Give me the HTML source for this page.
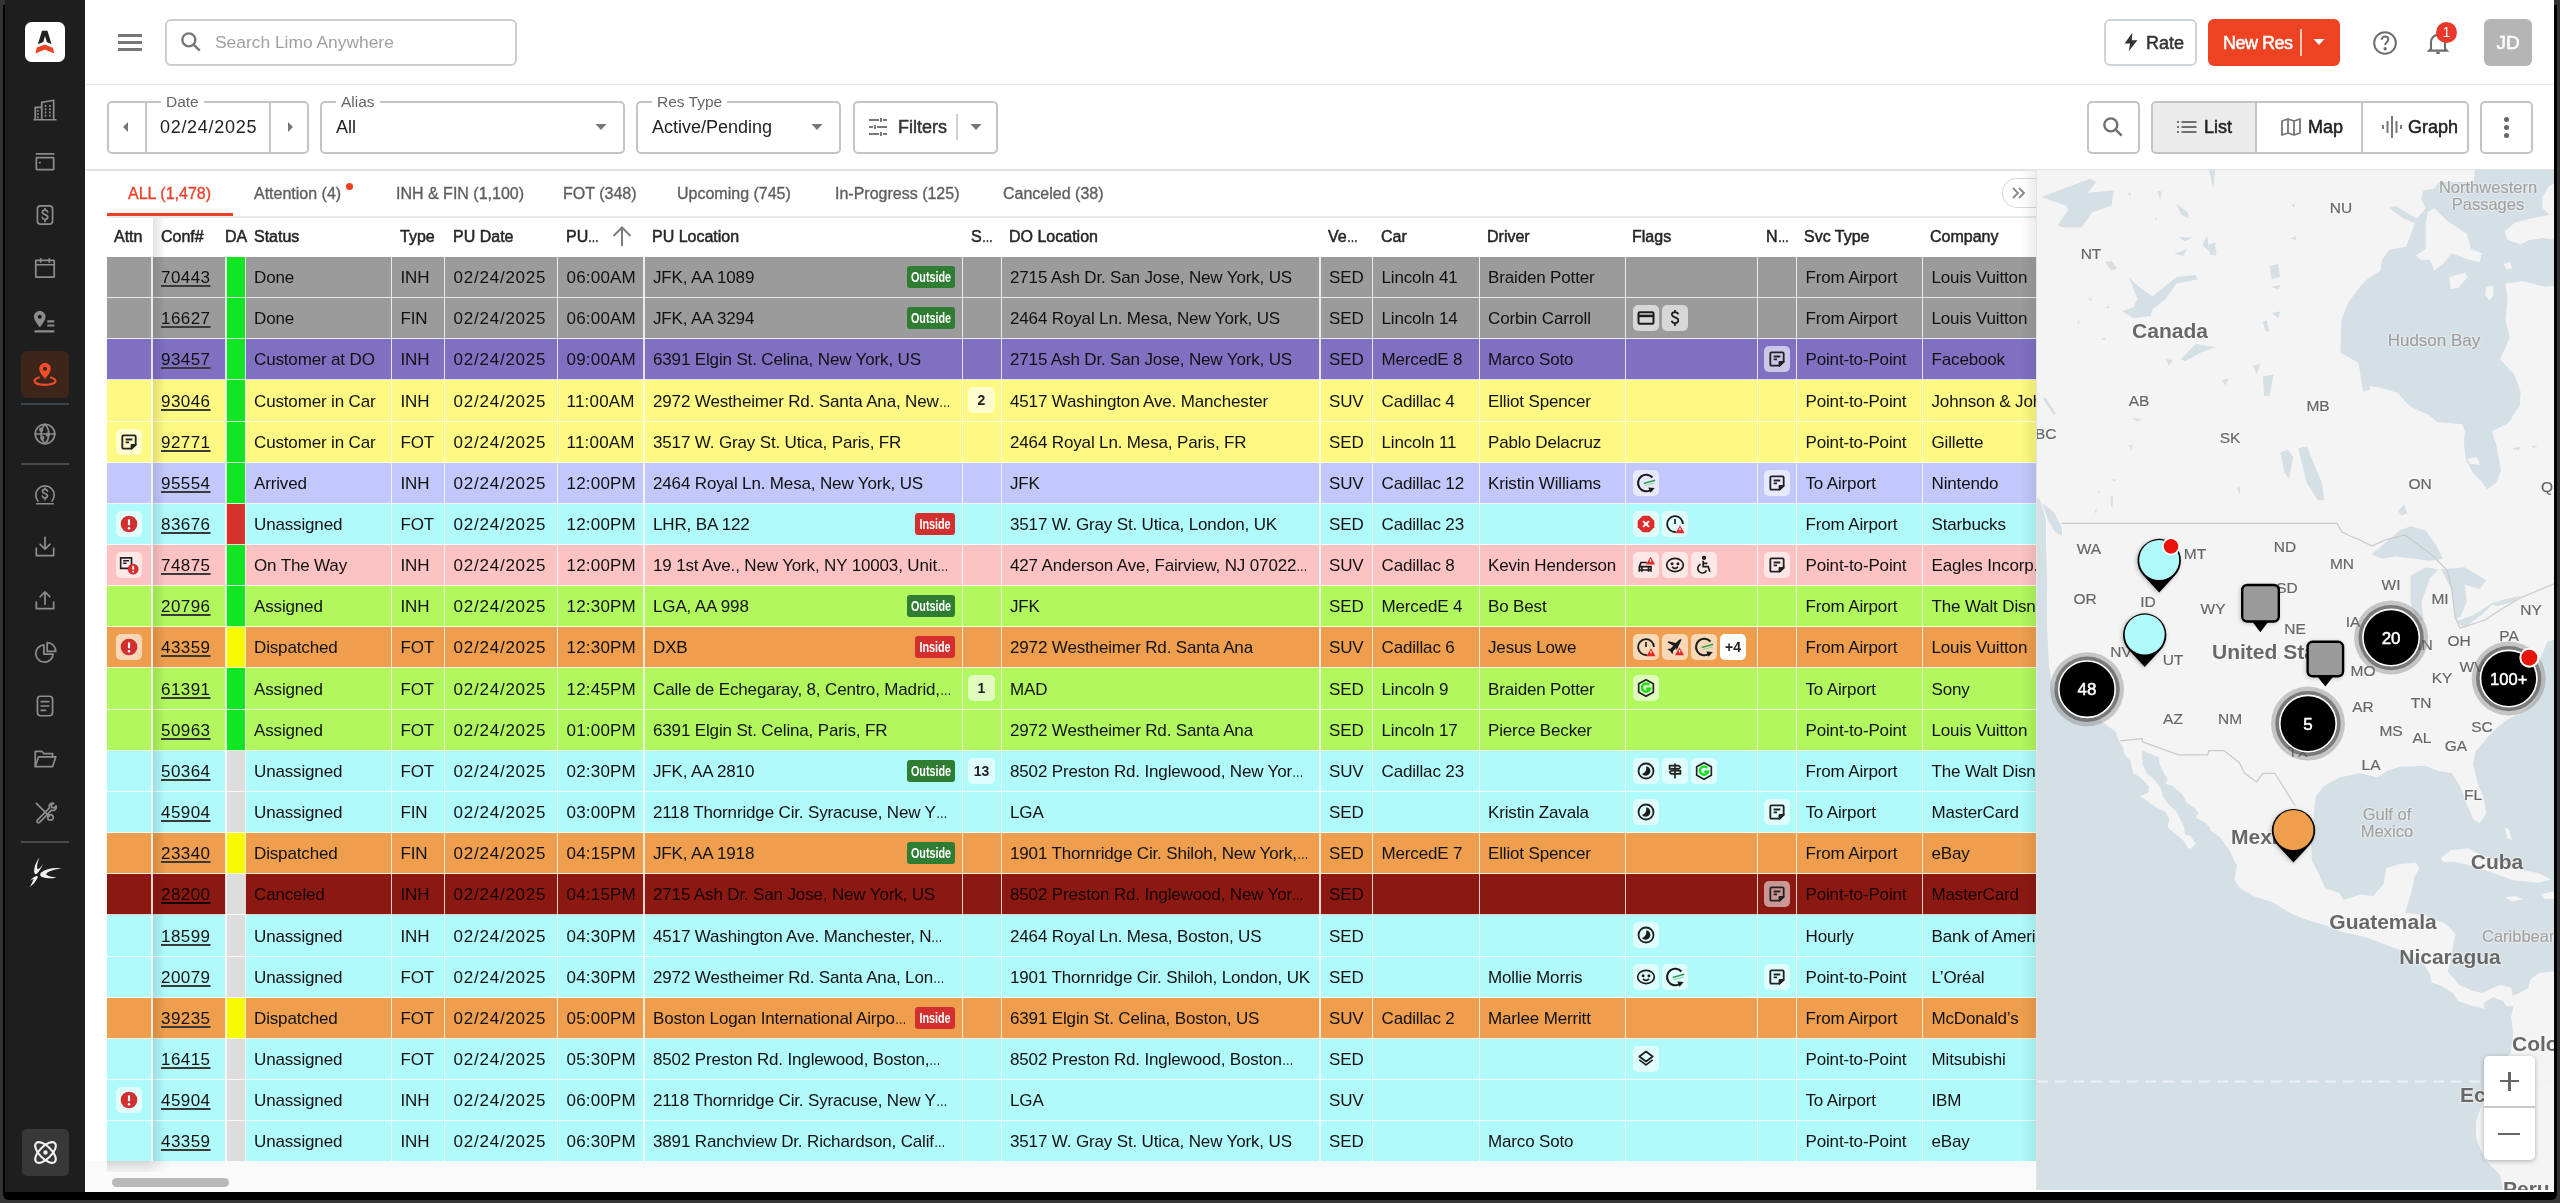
<!DOCTYPE html>
<html><head><meta charset="utf-8"><title>Limo Anywhere</title><style>
*{box-sizing:border-box;margin:0;padding:0}
html,body{width:2560px;height:1203px;overflow:hidden;background:#333333;font-family:"Liberation Sans",sans-serif;}
.a{position:absolute}
.win{position:absolute;left:3px;top:5px;width:2554px;height:1195px;background:#000;border-radius:0 0 6px 6px}
.side{position:absolute;left:5px;top:0;width:80px;height:1192px;background:#1e1e1e}
.main{position:absolute;left:85px;top:0;width:2469px;height:1192px;background:#fff;overflow:hidden}
.ico{position:absolute;display:block}
.t{position:absolute;white-space:nowrap;line-height:1}
.box{position:absolute;border:2px solid #c4c4c4;border-radius:5px;background:#fff}
.lbl{position:absolute;background:#fff;color:#666;font-size:15.5px;padding:0 5px;line-height:18px;white-space:nowrap}
.cell{position:absolute;top:0;height:39px;overflow:hidden;white-space:nowrap;font-size:17px;line-height:39px;color:#111;padding-left:8px;letter-spacing:-0.15px}
.row{position:absolute;left:107px;width:1930px;height:41px}
.hd{position:absolute;top:217px;height:39px;line-height:39px;font-size:16px;color:#262626;white-space:nowrap;-webkit-text-stroke:0.5px #262626}
.chip{position:absolute;width:26px;height:26px;border-radius:5px;background:rgba(255,255,255,.6)}
.chip svg{position:absolute;left:3px;top:3px}
.badge{position:absolute;height:22px;border-radius:3px;color:#fff;font-weight:bold;font-size:15px;line-height:22px;text-align:center}
.badge span{position:absolute;left:50%;top:0;transform:translateX(-50%) scaleX(.72)}
.med{-webkit-text-stroke:0.45px currentColor}
.mlbl{position:absolute;white-space:nowrap;line-height:1;color:#6b6b6b;font-size:15px}
</style></head>
<body>
<div class="win"></div>
<div class="side" style="will-change:transform"><div class="a" style="left:-5px;top:0;width:85px;height:1192px">
<div class="a" style="left:25.4px;top:22.4px;width:40px;height:40px;background:#fff;border-radius:6.5px"></div>
<svg class="ico" style="left:25.4px;top:22.4px" width="40" height="40" viewBox="0 0 40 40"><path d="M17 8.7 L22.4 8.7 L26.6 22.2 L21.8 20 L20 14.1 L18.3 20 L12.9 22.2 Z" fill="#222"/><path d="M19.7 22.6 L27.8 25.8 L29.3 31.4 L19.7 27.4 L10.6 31.4 L11.6 25.8 Z" fill="#ee4323"/></svg>
<svg class="ico" style="left:32.0px;top:97.0px" width="26" height="26" viewBox="0 0 24 24" fill="none" stroke="#8c8c8c" stroke-width="1.6" stroke-linecap="round" stroke-linejoin="round"><path d="M3 21V9.5h6V21M9 21V5l11-2v18M2 21h20"/><path d="M5.5 12.5v.5M5.5 15.5v.5M5.5 18.5v.5M12.5 8v.5M12.5 11v.5M12.5 14v.5M12.5 17v.5M16.5 8v.5M16.5 11v.5M16.5 14v.5M16.5 17v.5"/></svg>
<svg class="ico" style="left:32.0px;top:149.0px" width="26" height="26" viewBox="0 0 24 24" fill="none" stroke="#8c8c8c" stroke-width="1.6" stroke-linecap="round" stroke-linejoin="round"><path d="M4 4.5h16"/><rect x="4" y="8" width="16" height="11" rx="0.5"/><path d="M7 12.5h.5"/></svg>
<svg class="ico" style="left:32.0px;top:202.0px" width="26" height="26" viewBox="0 0 24 24" fill="none" stroke="#8c8c8c" stroke-width="1.6" stroke-linecap="round" stroke-linejoin="round"><rect x="5" y="3.5" width="14" height="17" rx="3"/><path d="M14.5 9.2c-.3-1-1.3-1.7-2.5-1.7-1.5 0-2.5.8-2.5 2 0 2.7 5 1.5 5 4.3 0 1.2-1 2.2-2.5 2.2-1.3 0-2.3-.7-2.6-1.8M12 6v1.5M12 16.2v1.8"/></svg>
<svg class="ico" style="left:32.0px;top:255.0px" width="26" height="26" viewBox="0 0 24 24" fill="none" stroke="#8c8c8c" stroke-width="1.6" stroke-linecap="round" stroke-linejoin="round"><rect x="3.5" y="5" width="17" height="15.5" rx="0.5"/><path d="M3.5 9h17M8 3.5v3M16 3.5v3"/></svg>
<svg class="ico" style="left:31px;top:308px" width="28" height="28" viewBox="0 0 24 24"><path d="M7.5 2.5c-2.8 0-5 2.2-5 5 0 3.5 5 9 5 9s5-5.5 5-9c0-2.8-2.2-5-5-5z" fill="#8c8c8c"/><circle cx="7.5" cy="7.5" r="1.8" fill="#1e1e1e"/><path d="M14 11.5h6M14 15h6M3 20h17" stroke="#8c8c8c" stroke-width="1.8"/></svg>
<div class="a" style="left:21px;top:351px;width:48px;height:47px;background:#3e2519;border-radius:6px"></div>
<svg class="ico" style="left:31px;top:360px" width="28" height="28" viewBox="0 0 24 24"><path d="M12 2.5c-2.8 0-5 2.2-5 5 0 3.5 5 8.5 5 8.5s5-5 5-8.5c0-2.8-2.2-5-5-5z" fill="#f04c2a"/><circle cx="12" cy="7.5" r="1.8" fill="#3e2519"/><path d="M7.5 14.8C4.8 15.5 3 16.7 3 18c0 2 4 3.3 9 3.3s9-1.3 9-3.3c0-1.3-1.8-2.5-4.5-3.2" stroke="#f04c2a" stroke-width="1.8" fill="none"/></svg>
<div class="a" style="left:21px;top:403px;width:48px;height:2px;background:#3a4750"></div>
<svg class="ico" style="left:32.0px;top:421.0px" width="26" height="26" viewBox="0 0 24 24" fill="none" stroke="#8c8c8c" stroke-width="1.6" stroke-linecap="round" stroke-linejoin="round"><circle cx="12" cy="12" r="9"/><path d="M3 12h18M12 3c2.5 2.5 3.5 5.5 3.5 9s-1 6.5-3.5 9c-2.5-2.5-3.5-5.5-3.5-9S9.5 5.5 12 3"/><circle cx="8.5" cy="8" r="1.2"/><circle cx="14.5" cy="12.5" r="1.2"/><circle cx="9.5" cy="15.5" r="1.2"/></svg>
<div class="a" style="left:21px;top:463px;width:48px;height:2px;background:#4a4a4a"></div>
<svg class="ico" style="left:32.0px;top:481.0px" width="26" height="26" viewBox="0 0 24 24" fill="none" stroke="#8c8c8c" stroke-width="1.6" stroke-linecap="round" stroke-linejoin="round"><path d="M5.5 18.5A8.5 8.5 0 1 1 18.5 18.5"/><path d="M4.5 21h15"/><path d="M14.3 9.3c-.3-.9-1.2-1.5-2.3-1.5-1.4 0-2.3.7-2.3 1.8 0 2.5 4.6 1.4 4.6 4 0 1.1-.9 2-2.3 2-1.2 0-2.1-.6-2.4-1.6M12 6.5v1.3M12 15.6v1.5"/></svg>
<svg class="ico" style="left:32.0px;top:534.0px" width="26" height="26" viewBox="0 0 24 24" fill="none" stroke="#8c8c8c" stroke-width="1.6" stroke-linecap="round" stroke-linejoin="round"><path d="M12 3v11M7.5 9.5 12 14l4.5-4.5M4 13v7h16v-7"/></svg>
<svg class="ico" style="left:32.0px;top:587.0px" width="26" height="26" viewBox="0 0 24 24" fill="none" stroke="#8c8c8c" stroke-width="1.6" stroke-linecap="round" stroke-linejoin="round"><path d="M12 16V4.5M7.5 9 12 4.5 16.5 9M4 14v6h16v-6"/></svg>
<svg class="ico" style="left:32.0px;top:640.0px" width="26" height="26" viewBox="0 0 24 24" fill="none" stroke="#8c8c8c" stroke-width="1.6" stroke-linecap="round" stroke-linejoin="round"><path d="M11 4.5a8 8 0 1 0 8.5 8.5H11z"/><path d="M14 2.5v8h8a8 8 0 0 0-8-8z"/></svg>
<svg class="ico" style="left:32.0px;top:693.0px" width="26" height="26" viewBox="0 0 24 24" fill="none" stroke="#8c8c8c" stroke-width="1.6" stroke-linecap="round" stroke-linejoin="round"><rect x="5" y="3" width="14" height="18" rx="3"/><path d="M8.5 8h7M8.5 12h7M8.5 16h4"/></svg>
<svg class="ico" style="left:32.0px;top:746.0px" width="26" height="26" viewBox="0 0 24 24" fill="none" stroke="#8c8c8c" stroke-width="1.6" stroke-linecap="round" stroke-linejoin="round"><path d="M3 19V5h6l2 2h8v3"/><path d="M3 19l3-9h16l-3 9z"/></svg>
<svg class="ico" style="left:32.0px;top:799.0px" width="26" height="26" viewBox="0 0 24 24" fill="none" stroke="#8c8c8c" stroke-width="1.6" stroke-linecap="round" stroke-linejoin="round"><path d="M4 4l12 12"/><path d="M20 4c-1.5-.5-3 0-3.8 1.2-.6 1-.6 2.1-.1 3L5 19.5A1.4 1.4 0 1 0 7 21.5l11-11.2c1 .5 2.1.4 3-.2 1.2-.8 1.7-2.3 1.2-3.8l-2 2-2-.5-.5-2z"/><circle cx="17" cy="17" r="2.5"/></svg>
<div class="a" style="left:21px;top:841px;width:48px;height:2px;background:#4a4a4a"></div>
<svg class="ico" style="left:20px;top:845px" width="50" height="50" viewBox="0 0 50 50" fill="#f0f0f0"><path d="M19.3 12.5 Q14 20 14.1 26.6 Q14.5 30 16.5 29 Q20 26 23.1 18.7 Q20 24 17.5 24 Q16 22 19.3 12.5Z"/><path d="M41.6 23.3 Q28 22 20.5 28 Q19.5 31 22 32 Q29 34.5 36.6 32.4 Q29 32 26 29.5 Q27 25.5 41.6 23.3Z"/><path d="M17.5 31.2 Q15 30.5 10 35.7 Q12 34.3 13.7 34.1 Q12 38 10 42 Q15 38 17.9 32.4Z"/></svg>
<div class="a" style="left:22px;top:1129px;width:47px;height:47px;background:#383838;border-radius:5px"></div>
<svg class="ico" style="left:31px;top:1138px" width="29" height="29" viewBox="0 0 24 24" fill="none" stroke="#f2f2f2" stroke-width="1.7"><ellipse cx="12" cy="12" rx="11" ry="5" transform="rotate(45 12 12)"/><ellipse cx="12" cy="12" rx="11" ry="5" transform="rotate(-45 12 12)"/><circle cx="12" cy="12" r="1" fill="#f2f2f2"/></svg>
</div></div>
<div class="main" style="will-change:transform"><div class="a" style="left:-85px;top:0;width:2560px;height:1192px">
<div class="a" style="left:85px;top:84px;width:2469px;height:1px;background:#e3e3e3"></div>
<div class="a" style="left:118px;top:34px;width:24px;height:2.6px;background:#767676"></div>
<div class="a" style="left:118px;top:41px;width:24px;height:2.6px;background:#767676"></div>
<div class="a" style="left:118px;top:48px;width:24px;height:2.6px;background:#767676"></div>
<div class="box" style="left:165px;top:19px;width:352px;height:47px;border-width:2px;border-color:#cdcdcd;border-radius:6px"></div>
<svg class="ico" style="left:178px;top:29px" width="26" height="26" viewBox="0 0 24 24" fill="none" stroke="#777" stroke-width="2.2"><circle cx="10" cy="10" r="6"/><path d="M14.5 14.5 20 20"/></svg>
<div class="t" style="left:215px;top:34px;font-size:17.4px;color:#a0a0a0">Search Limo Anywhere</div>
<div class="box" style="left:2104px;top:19px;width:93px;height:47px;border-color:#cfd4d8;border-radius:6px"></div>
<svg class="ico" style="left:2120px;top:31px" width="22" height="22" viewBox="0 0 24 24"><path d="M13.5 2 5 13.5h6L9.5 22 19 10h-6.2z" fill="#333"/></svg>
<div class="t" style="left:2146px;top:34px;font-size:18px;color:#333;-webkit-text-stroke:0.5px #333">Rate</div>
<div class="a" style="left:2208px;top:19px;width:132px;height:47px;background:#ee4323;border-radius:6px"></div>
<div class="t" style="left:2223px;top:34px;font-size:18px;color:#fff;-webkit-text-stroke:0.5px #fff;letter-spacing:-0.5px">New Res</div>
<div class="a" style="left:2300px;top:29px;width:1.5px;height:27px;background:rgba(255,255,255,.7)"></div>
<svg class="ico" style="left:2312px;top:37px" width="14" height="10" viewBox="0 0 14 10"><path d="M1.5 2h11L7 8z" fill="#fff"/></svg>
<svg class="ico" style="left:2371px;top:29px" width="28" height="28" viewBox="0 0 24 24" fill="none" stroke="#6d6d6d" stroke-width="1.7"><circle cx="12" cy="12" r="9.3"/><path d="M9.2 9.3c0-1.7 1.3-2.8 2.9-2.8s2.8 1.1 2.8 2.6c0 2.2-2.8 2.3-2.8 4.6"/><circle cx="12.1" cy="16.9" r=".6" fill="#6d6d6d"/></svg>
<svg class="ico" style="left:2424px;top:29px" width="28" height="28" viewBox="0 0 24 24" fill="none" stroke="#6d6d6d" stroke-width="1.8"><path d="M6 17V11a6 6 0 0 1 12 0v6l1.5 1.5h-15z"/><path d="M10.5 20.5h3"/></svg>
<div class="a" style="left:2436px;top:22px;width:21px;height:21px;border-radius:50%;background:#e8382a;color:#fff;font-size:14px;text-align:center;line-height:21px">1</div>
<div class="a" style="left:2484px;top:19px;width:48px;height:47px;background:#b5b5b5;border-radius:6px;color:#fff;font-size:19px;-webkit-text-stroke:0.5px #fff;text-align:center;line-height:47px">JD</div>
<div class="a" style="left:85px;top:169px;width:2469px;height:1.5px;background:#e3e3e3"></div>
<div class="box" style="left:107px;top:101px;width:202px;height:53px"></div>
<div class="a" style="left:145px;top:102px;width:2px;height:51px;background:#c4c4c4"></div>
<div class="a" style="left:269px;top:102px;width:2px;height:51px;background:#c4c4c4"></div>
<svg class="ico" style="left:121px;top:120px" width="10" height="14" viewBox="0 0 10 14"><path d="M7 2v10L2 7z" fill="#777"/></svg>
<svg class="ico" style="left:285px;top:120px" width="10" height="14" viewBox="0 0 10 14"><path d="M3 2v10l5-5z" fill="#777"/></svg>
<div class="lbl" style="left:161px;top:93px">Date</div>
<div class="t" style="left:160px;top:118px;font-size:18px;color:#222;letter-spacing:0.7px">02/24/2025</div>
<div class="box" style="left:320px;top:101px;width:305px;height:53px"></div>
<div class="lbl" style="left:336px;top:93px">Alias</div>
<div class="t" style="left:336px;top:118px;font-size:18px;color:#222">All</div>
<svg class="ico" style="left:594px;top:122px" width="14" height="10" viewBox="0 0 14 10"><path d="M1.5 2h11L7 8z" fill="#777"/></svg>
<div class="box" style="left:636px;top:101px;width:205px;height:53px"></div>
<div class="lbl" style="left:652px;top:93px">Res Type</div>
<div class="t" style="left:652px;top:118px;font-size:18px;color:#222">Active/Pending</div>
<svg class="ico" style="left:810px;top:122px" width="14" height="10" viewBox="0 0 14 10"><path d="M1.5 2h11L7 8z" fill="#777"/></svg>
<div class="box" style="left:853px;top:101px;width:145px;height:53px"></div>
<svg class="ico" style="left:866px;top:115px" width="24" height="24" viewBox="0 0 24 24" fill="none" stroke="#777" stroke-width="2"><path d="M3 5h10M17 5h4M15 3v4M3 12h4M11 12h10M9 10v4M3 19h10M17 19h4M15 17v4"/></svg>
<div class="t" style="left:898px;top:118px;font-size:18px;color:#333;-webkit-text-stroke:0.5px currentColor">Filters</div>
<div class="a" style="left:956px;top:114px;width:1.5px;height:26px;background:#d0d0d0"></div>
<svg class="ico" style="left:969px;top:122px" width="14" height="10" viewBox="0 0 14 10"><path d="M1.5 2h11L7 8z" fill="#777"/></svg>
<div class="box" style="left:2087px;top:101px;width:53px;height:53px"></div>
<svg class="ico" style="left:2100px;top:114px" width="26" height="26" viewBox="0 0 24 24" fill="none" stroke="#6f6f6f" stroke-width="2.2"><circle cx="10" cy="10" r="6"/><path d="M14.5 14.5 20 20"/></svg>
<div class="box" style="left:2151px;top:101px;width:318px;height:53px;overflow:hidden"><div class="a" style="left:0;top:0;width:104px;height:49px;background:#ebebeb"></div></div>
<div class="a" style="left:2255px;top:102px;width:2px;height:51px;background:#c4c4c4"></div>
<div class="a" style="left:2361px;top:102px;width:2px;height:51px;background:#c4c4c4"></div>
<svg class="ico" style="left:2176px;top:116px" width="22" height="22" viewBox="0 0 22 22" fill="#6f6f6f"><rect x="1" y="5" width="2" height="2"/><rect x="1" y="10" width="2" height="2"/><rect x="1" y="15" width="2" height="2"/><rect x="5.5" y="5" width="15" height="2"/><rect x="5.5" y="10" width="15" height="2"/><rect x="5.5" y="15" width="15" height="2"/></svg>
<div class="t" style="left:2204px;top:118px;font-size:18px;color:#222;-webkit-text-stroke:0.5px currentColor">List</div>
<svg class="ico" style="left:2280px;top:116px" width="22" height="22" viewBox="0 0 22 22" fill="none" stroke="#777" stroke-width="1.8" stroke-linejoin="round"><path d="M2 5l6-2 6 2 6-2v14l-6 2-6-2-6 2z M8 3v14M14 5v14"/></svg>
<div class="t" style="left:2308px;top:118px;font-size:18px;color:#222;-webkit-text-stroke:0.5px currentColor">Map</div>
<svg class="ico" style="left:2381px;top:115px" width="22" height="24" viewBox="0 0 22 24" fill="#777"><rect x="1" y="10" width="2" height="4"/><rect x="5.5" y="6" width="2" height="12"/><rect x="10" y="1" width="2" height="22"/><rect x="14.5" y="6" width="2" height="12"/><rect x="19" y="10" width="2" height="4"/></svg>
<div class="t" style="left:2408px;top:118px;font-size:18px;color:#222;-webkit-text-stroke:0.5px currentColor">Graph</div>
<div class="box" style="left:2480px;top:101px;width:53px;height:53px"></div>
<div class="a" style="left:2503.5px;top:117px;width:5px;height:5px;border-radius:50%;background:#666"></div>
<div class="a" style="left:2503.5px;top:125px;width:5px;height:5px;border-radius:50%;background:#666"></div>
<div class="a" style="left:2503.5px;top:133px;width:5px;height:5px;border-radius:50%;background:#666"></div>
<div class="a" style="left:107px;top:216px;width:1930px;height:2px;background:#e6e9ea"></div>
<div class="a" style="left:107px;top:213px;width:126px;height:3px;background:#ee3f22"></div>
<div class="t" style="left:128px;top:186px;font-size:16px;color:#e8442b;-webkit-text-stroke:0.35px #e8442b">ALL (1,478)</div>
<div class="t" style="left:254px;top:186px;font-size:16px;color:#5f5f5f;-webkit-text-stroke:0.35px #5f5f5f">Attention (4)</div>
<div class="t" style="left:396px;top:186px;font-size:16px;color:#5f5f5f;-webkit-text-stroke:0.35px #5f5f5f">INH &amp; FIN (1,100)</div>
<div class="t" style="left:563px;top:186px;font-size:16px;color:#5f5f5f;-webkit-text-stroke:0.35px #5f5f5f">FOT (348)</div>
<div class="t" style="left:677px;top:186px;font-size:16px;color:#5f5f5f;-webkit-text-stroke:0.35px #5f5f5f">Upcoming (745)</div>
<div class="t" style="left:835px;top:186px;font-size:16px;color:#5f5f5f;-webkit-text-stroke:0.35px #5f5f5f">In-Progress (125)</div>
<div class="t" style="left:1003px;top:186px;font-size:16px;color:#5f5f5f;-webkit-text-stroke:0.35px #5f5f5f">Canceled (38)</div>
<div class="a" style="left:346px;top:183px;width:7px;height:7px;border-radius:50%;background:#ee3f22"></div>
<div class="a" style="left:2002px;top:178px;width:40px;height:30px;border:1.5px solid #d9d9d9;border-right:none;border-radius:15px 0 0 15px;background:#fff"></div>
<svg class="ico" style="left:2011px;top:185px" width="17" height="16" viewBox="0 0 17 16" fill="none" stroke="#888" stroke-width="1.8"><path d="M2 3l5 5-5 5M8 3l5 5-5 5"/></svg>
<div class="hd" style="left:114px">Attn</div>
<div class="hd" style="left:161px">Conf#</div>
<div class="hd" style="left:225px">DA</div>
<div class="hd" style="left:254px">Status</div>
<div class="hd" style="left:400px">Type</div>
<div class="hd" style="left:453px">PU Date</div>
<div class="hd" style="left:566px">PU<span style="display:inline-block;transform:scaleX(.68);transform-origin:left">…</span></div>
<div class="hd" style="left:652px">PU Location</div>
<div class="hd" style="left:971px">S<span style="display:inline-block;transform:scaleX(.68);transform-origin:left">…</span></div>
<div class="hd" style="left:1009px">DO Location</div>
<div class="hd" style="left:1328px">Ve<span style="display:inline-block;transform:scaleX(.68);transform-origin:left">…</span></div>
<div class="hd" style="left:1381px">Car</div>
<div class="hd" style="left:1487px">Driver</div>
<div class="hd" style="left:1632px">Flags</div>
<div class="hd" style="left:1766px">N<span style="display:inline-block;transform:scaleX(.68);transform-origin:left">…</span></div>
<div class="hd" style="left:1804px">Svc Type</div>
<div class="hd" style="left:1930px">Company</div>
<svg class="ico" style="left:610px;top:224px" width="24" height="24" viewBox="0 0 24 24" fill="none" stroke="#7d7d7d" stroke-width="2"><path d="M12 22V3.5M3.5 12l8.5-8.5 8.5 8.5"/></svg>
<div class="a" style="left:85px;top:1161px;width:1952px;height:31px;background:#fafafa"></div>
<div class="a" style="left:112px;top:1178px;width:117px;height:9px;border-radius:5px;background:#b9b9b9"></div>
<div class="row" style="top:257px;height:41px;background:#9b9b9b">
<div class="a" style="left:119.30000000000001px;top:0;width:18.5px;height:41px;background:#12e624"></div>
<div class="cell" style="left:46px;width:72.19999999999999px;height:41px;line-height:42px;color:#111;"><span style="letter-spacing:0.45px"><span style="text-decoration:underline;text-decoration-color:#3a3a3a;text-decoration-thickness:1.5px;text-underline-offset:1.5px">70443</span></span></div>
<div class="cell" style="left:139px;width:145px;height:41px;line-height:42px;color:#111;">Done</div>
<div class="cell" style="left:285.5px;width:51.5px;height:41px;line-height:42px;color:#111;">INH</div>
<div class="cell" style="left:338.5px;width:111.5px;height:41px;line-height:42px;color:#111;letter-spacing:0.77px">02/24/2025</div>
<div class="cell" style="left:451.5px;width:84.79999999999995px;height:41px;line-height:42px;color:#111;letter-spacing:0.2px">06:00AM</div>
<div class="cell" style="left:538px;width:257px;height:41px;line-height:42px;color:#111">JFK, AA 1089</div>
<div class="badge" style="left:800px;top:9px;width:48px;background:#2e7d32"><span>Outside</span></div>
<div class="cell" style="left:895px;width:317.29999999999995px;height:41px;line-height:42px;color:#111;">2715 Ash Dr. San Jose, New York, US</div>
<div class="cell" style="left:1214px;width:51px;height:41px;line-height:42px;color:#111;">SED</div>
<div class="cell" style="left:1266.5px;width:105.0px;height:41px;line-height:42px;color:#111;">Lincoln 41</div>
<div class="cell" style="left:1373px;width:145px;height:41px;line-height:42px;color:#111;">Braiden Potter</div>
<div class="cell" style="left:1690.5px;width:124.5px;height:41px;line-height:42px;color:#111;">From Airport</div>
<div class="cell" style="left:1816.5px;width:113.5px;height:41px;line-height:42px;color:#111;width:113px">Louis Vuitton</div>
</div>
<div class="a" style="left:107px;top:296.5px;width:1930px;height:1.5px;background:rgba(255,255,255,.8)"></div>
<div class="row" style="top:298px;height:41px;background:#9b9b9b">
<div class="a" style="left:119.30000000000001px;top:0;width:18.5px;height:41px;background:#12e624"></div>
<div class="cell" style="left:46px;width:72.19999999999999px;height:41px;line-height:42px;color:#111;"><span style="letter-spacing:0.45px"><span style="text-decoration:underline;text-decoration-color:#3a3a3a;text-decoration-thickness:1.5px;text-underline-offset:1.5px">16627</span></span></div>
<div class="cell" style="left:139px;width:145px;height:41px;line-height:42px;color:#111;">Done</div>
<div class="cell" style="left:285.5px;width:51.5px;height:41px;line-height:42px;color:#111;">FIN</div>
<div class="cell" style="left:338.5px;width:111.5px;height:41px;line-height:42px;color:#111;letter-spacing:0.77px">02/24/2025</div>
<div class="cell" style="left:451.5px;width:84.79999999999995px;height:41px;line-height:42px;color:#111;letter-spacing:0.2px">06:00AM</div>
<div class="cell" style="left:538px;width:257px;height:41px;line-height:42px;color:#111">JFK, AA 3294</div>
<div class="badge" style="left:800px;top:9px;width:48px;background:#2e7d32"><span>Outside</span></div>
<div class="cell" style="left:895px;width:317.29999999999995px;height:41px;line-height:42px;color:#111;">2464 Royal Ln. Mesa, New York, US</div>
<div class="cell" style="left:1214px;width:51px;height:41px;line-height:42px;color:#111;">SED</div>
<div class="cell" style="left:1266.5px;width:105.0px;height:41px;line-height:42px;color:#111;">Lincoln 14</div>
<div class="cell" style="left:1373px;width:145px;height:41px;line-height:42px;color:#111;">Corbin Carroll</div>
<div class="cell" style="left:1690.5px;width:124.5px;height:41px;line-height:42px;color:#111;">From Airport</div>
<div class="cell" style="left:1816.5px;width:113.5px;height:41px;line-height:42px;color:#111;width:113px">Louis Vuitton</div>
<div class="chip" style="left:1526px;top:7px"><svg width="20" height="20" viewBox="0 0 24 24" fill="none" stroke="#1c1c1c" stroke-width="2.4"><rect x="3" y="5" width="18" height="14" rx="1.5"/><path d="M3 9.5h18" stroke-width="3"/></svg></div>
<div class="chip" style="left:1555px;top:7px"><svg width="20" height="20" viewBox="0 0 24 24" fill="none" stroke="#1c1c1c" stroke-width="2"><path d="M16 7.5c-.5-1.6-2-2.6-4-2.6-2.3 0-3.8 1.3-3.8 3 0 4.3 7.8 2.3 7.8 6.8 0 1.9-1.7 3.4-4 3.4-2.1 0-3.6-1-4.1-2.8M12 2.5v2.4M12 18.1v3.4"/></svg></div>
</div>
<div class="a" style="left:107px;top:337.5px;width:1930px;height:1.5px;background:rgba(255,255,255,.8)"></div>
<div class="row" style="top:339px;height:41px;background:#7f70c2">
<div class="a" style="left:119.30000000000001px;top:0;width:18.5px;height:41px;background:#12e624"></div>
<div class="cell" style="left:46px;width:72.19999999999999px;height:41px;line-height:42px;color:#111;"><span style="letter-spacing:0.45px"><span style="text-decoration:underline;text-decoration-color:#3a3a3a;text-decoration-thickness:1.5px;text-underline-offset:1.5px">93457</span></span></div>
<div class="cell" style="left:139px;width:145px;height:41px;line-height:42px;color:#111;">Customer at DO</div>
<div class="cell" style="left:285.5px;width:51.5px;height:41px;line-height:42px;color:#111;">INH</div>
<div class="cell" style="left:338.5px;width:111.5px;height:41px;line-height:42px;color:#111;letter-spacing:0.77px">02/24/2025</div>
<div class="cell" style="left:451.5px;width:84.79999999999995px;height:41px;line-height:42px;color:#111;letter-spacing:0.2px">09:00AM</div>
<div class="cell" style="left:538px;width:317px;height:41px;line-height:42px;color:#111">6391 Elgin St. Celina, New York, US</div>
<div class="cell" style="left:895px;width:317.29999999999995px;height:41px;line-height:42px;color:#111;">2715 Ash Dr. San Jose, New York, US</div>
<div class="cell" style="left:1214px;width:51px;height:41px;line-height:42px;color:#111;">SED</div>
<div class="cell" style="left:1266.5px;width:105.0px;height:41px;line-height:42px;color:#111;">MercedE 8</div>
<div class="cell" style="left:1373px;width:145px;height:41px;line-height:42px;color:#111;">Marco Soto</div>
<div class="cell" style="left:1690.5px;width:124.5px;height:41px;line-height:42px;color:#111;">Point-to-Point</div>
<div class="cell" style="left:1816.5px;width:113.5px;height:41px;line-height:42px;color:#111;width:113px">Facebook</div>
<div class="chip" style="left:1657px;top:7px;background:rgba(255,255,255,.6)"><svg width="20" height="20" viewBox="0 0 24 24" fill="none" stroke="#222" stroke-width="2.2" stroke-linejoin="round"><path d="M4 5.5a1.5 1.5 0 0 1 1.5-1.5h13a1.5 1.5 0 0 1 1.5 1.5V15l-5 5H5.5A1.5 1.5 0 0 1 4 18.5z"/><path d="M8 9h8M8 12.5h4"/><path d="M15 20v-4.5h5z" fill="#222"/></svg></div>
</div>
<div class="a" style="left:107px;top:378.5px;width:1930px;height:1.5px;background:rgba(255,255,255,.8)"></div>
<div class="row" style="top:380px;height:42px;background:#fdf982">
<div class="a" style="left:119.30000000000001px;top:0;width:18.5px;height:42px;background:#12e624"></div>
<div class="cell" style="left:46px;width:72.19999999999999px;height:42px;line-height:43px;color:#111;"><span style="letter-spacing:0.45px"><span style="text-decoration:underline;text-decoration-color:#3a3a3a;text-decoration-thickness:1.5px;text-underline-offset:1.5px">93046</span></span></div>
<div class="cell" style="left:139px;width:145px;height:42px;line-height:43px;color:#111;">Customer in Car</div>
<div class="cell" style="left:285.5px;width:51.5px;height:42px;line-height:43px;color:#111;">INH</div>
<div class="cell" style="left:338.5px;width:111.5px;height:42px;line-height:43px;color:#111;letter-spacing:0.77px">02/24/2025</div>
<div class="cell" style="left:451.5px;width:84.79999999999995px;height:42px;line-height:43px;color:#111;letter-spacing:0.2px">11:00AM</div>
<div class="cell" style="left:538px;width:317px;height:42px;line-height:43px;color:#111">2972 Westheimer Rd. Santa Ana, New<span style="display:inline-block;transform:scaleX(.68);transform-origin:left">…</span></div>
<div class="a" style="left:861px;top:7px;width:27px;height:26px;border-radius:5px;background:rgba(255,255,255,.6);font-size:14px;font-weight:bold;color:#222;text-align:center;line-height:26px">2</div>
<div class="cell" style="left:895px;width:317.29999999999995px;height:42px;line-height:43px;color:#111;">4517 Washington Ave. Manchester</div>
<div class="cell" style="left:1214px;width:51px;height:42px;line-height:43px;color:#111;">SUV</div>
<div class="cell" style="left:1266.5px;width:105.0px;height:42px;line-height:43px;color:#111;">Cadillac 4</div>
<div class="cell" style="left:1373px;width:145px;height:42px;line-height:43px;color:#111;">Elliot Spencer</div>
<div class="cell" style="left:1690.5px;width:124.5px;height:42px;line-height:43px;color:#111;">Point-to-Point</div>
<div class="cell" style="left:1816.5px;width:113.5px;height:42px;line-height:43px;color:#111;width:113px">Johnson &amp; Johnson</div>
</div>
<div class="a" style="left:107px;top:420.5px;width:1930px;height:1.5px;background:rgba(255,255,255,.8)"></div>
<div class="row" style="top:422px;height:41px;background:#fdf982">
<div class="a" style="left:119.30000000000001px;top:0;width:18.5px;height:41px;background:#12e624"></div>
<div class="cell" style="left:46px;width:72.19999999999999px;height:41px;line-height:42px;color:#111;"><span style="letter-spacing:0.45px"><span style="text-decoration:underline;text-decoration-color:#3a3a3a;text-decoration-thickness:1.5px;text-underline-offset:1.5px">92771</span></span></div>
<div class="cell" style="left:139px;width:145px;height:41px;line-height:42px;color:#111;">Customer in Car</div>
<div class="cell" style="left:285.5px;width:51.5px;height:41px;line-height:42px;color:#111;">FOT</div>
<div class="cell" style="left:338.5px;width:111.5px;height:41px;line-height:42px;color:#111;letter-spacing:0.77px">02/24/2025</div>
<div class="cell" style="left:451.5px;width:84.79999999999995px;height:41px;line-height:42px;color:#111;letter-spacing:0.2px">11:00AM</div>
<div class="cell" style="left:538px;width:317px;height:41px;line-height:42px;color:#111">3517 W. Gray St. Utica, Paris, FR</div>
<div class="cell" style="left:895px;width:317.29999999999995px;height:41px;line-height:42px;color:#111;">2464 Royal Ln. Mesa, Paris, FR</div>
<div class="cell" style="left:1214px;width:51px;height:41px;line-height:42px;color:#111;">SED</div>
<div class="cell" style="left:1266.5px;width:105.0px;height:41px;line-height:42px;color:#111;">Lincoln 11</div>
<div class="cell" style="left:1373px;width:145px;height:41px;line-height:42px;color:#111;">Pablo Delacruz</div>
<div class="cell" style="left:1690.5px;width:124.5px;height:41px;line-height:42px;color:#111;">Point-to-Point</div>
<div class="cell" style="left:1816.5px;width:113.5px;height:41px;line-height:42px;color:#111;width:113px">Gillette</div>
<div class="chip" style="left:9px;top:7px"><svg width="20" height="20" viewBox="0 0 24 24" fill="none" stroke="#222" stroke-width="2.2" stroke-linejoin="round"><path d="M4 5.5a1.5 1.5 0 0 1 1.5-1.5h13a1.5 1.5 0 0 1 1.5 1.5V15l-5 5H5.5A1.5 1.5 0 0 1 4 18.5z"/><path d="M8 9h8M8 12.5h4"/><path d="M15 20v-4.5h5z" fill="#222"/></svg></div>
</div>
<div class="a" style="left:107px;top:461.5px;width:1930px;height:1.5px;background:rgba(255,255,255,.8)"></div>
<div class="row" style="top:463px;height:41px;background:#c2c8fc">
<div class="a" style="left:119.30000000000001px;top:0;width:18.5px;height:41px;background:#12e624"></div>
<div class="cell" style="left:46px;width:72.19999999999999px;height:41px;line-height:42px;color:#111;"><span style="letter-spacing:0.45px"><span style="text-decoration:underline;text-decoration-color:#3a3a3a;text-decoration-thickness:1.5px;text-underline-offset:1.5px">95554</span></span></div>
<div class="cell" style="left:139px;width:145px;height:41px;line-height:42px;color:#111;">Arrived</div>
<div class="cell" style="left:285.5px;width:51.5px;height:41px;line-height:42px;color:#111;">INH</div>
<div class="cell" style="left:338.5px;width:111.5px;height:41px;line-height:42px;color:#111;letter-spacing:0.77px">02/24/2025</div>
<div class="cell" style="left:451.5px;width:84.79999999999995px;height:41px;line-height:42px;color:#111;letter-spacing:0.2px">12:00PM</div>
<div class="cell" style="left:538px;width:317px;height:41px;line-height:42px;color:#111">2464 Royal Ln. Mesa, New York, US</div>
<div class="cell" style="left:895px;width:317.29999999999995px;height:41px;line-height:42px;color:#111;">JFK</div>
<div class="cell" style="left:1214px;width:51px;height:41px;line-height:42px;color:#111;">SUV</div>
<div class="cell" style="left:1266.5px;width:105.0px;height:41px;line-height:42px;color:#111;">Cadillac 12</div>
<div class="cell" style="left:1373px;width:145px;height:41px;line-height:42px;color:#111;">Kristin Williams</div>
<div class="cell" style="left:1690.5px;width:124.5px;height:41px;line-height:42px;color:#111;">To Airport</div>
<div class="cell" style="left:1816.5px;width:113.5px;height:41px;line-height:42px;color:#111;width:113px">Nintendo</div>
<div class="chip" style="left:1526px;top:7px"><svg width="22" height="22" viewBox="0 0 24 24" fill="none" style="left:2px;top:2px"><path d="M19 6A9 9 0 1 0 16.5 20" stroke="#1c1c1c" stroke-width="2.3"/><path d="M14.5 17l7 .5-4.5 5z" fill="#1c1c1c"/><path d="M9.5 12.5l12.5-3.5" stroke="#2e9e4e" stroke-width="1.6"/><path d="M10.5 15l11-3" stroke="#8fd89f" stroke-width="1.3"/></svg></div>
<div class="chip" style="left:1657px;top:7px;background:rgba(255,255,255,.6)"><svg width="20" height="20" viewBox="0 0 24 24" fill="none" stroke="#222" stroke-width="2.2" stroke-linejoin="round"><path d="M4 5.5a1.5 1.5 0 0 1 1.5-1.5h13a1.5 1.5 0 0 1 1.5 1.5V15l-5 5H5.5A1.5 1.5 0 0 1 4 18.5z"/><path d="M8 9h8M8 12.5h4"/><path d="M15 20v-4.5h5z" fill="#222"/></svg></div>
</div>
<div class="a" style="left:107px;top:502.5px;width:1930px;height:1.5px;background:rgba(255,255,255,.8)"></div>
<div class="row" style="top:504px;height:41px;background:#b0fafb">
<div class="a" style="left:119.30000000000001px;top:0;width:18.5px;height:41px;background:#d8322c"></div>
<div class="cell" style="left:46px;width:72.19999999999999px;height:41px;line-height:42px;color:#111;"><span style="letter-spacing:0.45px"><span style="text-decoration:underline;text-decoration-color:#3a3a3a;text-decoration-thickness:1.5px;text-underline-offset:1.5px">83676</span></span></div>
<div class="cell" style="left:139px;width:145px;height:41px;line-height:42px;color:#111;">Unassigned</div>
<div class="cell" style="left:285.5px;width:51.5px;height:41px;line-height:42px;color:#111;">FOT</div>
<div class="cell" style="left:338.5px;width:111.5px;height:41px;line-height:42px;color:#111;letter-spacing:0.77px">02/24/2025</div>
<div class="cell" style="left:451.5px;width:84.79999999999995px;height:41px;line-height:42px;color:#111;letter-spacing:0.2px">12:00PM</div>
<div class="cell" style="left:538px;width:267px;height:41px;line-height:42px;color:#111">LHR, BA 122</div>
<div class="badge" style="left:808px;top:9px;width:40px;background:#d32f2f"><span>Inside</span></div>
<div class="cell" style="left:895px;width:317.29999999999995px;height:41px;line-height:42px;color:#111;">3517 W. Gray St. Utica, London, UK</div>
<div class="cell" style="left:1214px;width:51px;height:41px;line-height:42px;color:#111;">SED</div>
<div class="cell" style="left:1266.5px;width:105.0px;height:41px;line-height:42px;color:#111;">Cadillac 23</div>
<div class="cell" style="left:1373px;width:145px;height:41px;line-height:42px;color:#111;"></div>
<div class="cell" style="left:1690.5px;width:124.5px;height:41px;line-height:42px;color:#111;">From Airport</div>
<div class="cell" style="left:1816.5px;width:113.5px;height:41px;line-height:42px;color:#111;width:113px">Starbucks</div>
<div class="chip" style="left:1526px;top:7px"><svg width="20" height="20" viewBox="0 0 24 24"><path d="M8 2h8l6 6v8l-6 6H8l-6-6V8z" fill="#e02b2b"/><path d="M8.5 8.5l7 7M15.5 8.5l-7 7" stroke="#fff" stroke-width="2.4"/></svg></div>
<div class="chip" style="left:1555px;top:7px"><svg width="20" height="20" viewBox="0 0 24 24" fill="none"><path d="M13 21.5A9.5 9.5 0 1 1 21.5 12" stroke="#1c1c1c" stroke-width="2.2"/><path d="M12 6v6" stroke="#1c1c1c" stroke-width="2"/><path d="M18 13.5l5.5 9.5h-11z" fill="#e02b2b"/><path d="M18 16.5v3" stroke="#fff" stroke-width="1.4"/></svg></div>
<div class="chip" style="left:9px;top:7px"><svg width="20" height="20" viewBox="0 0 24 24"><circle cx="12" cy="12" r="10" fill="#d32f2f"/><path d="M12 6.5v7" stroke="#fff" stroke-width="2.6"/><circle cx="12" cy="17" r="1.5" fill="#fff"/></svg></div>
</div>
<div class="a" style="left:107px;top:543.5px;width:1930px;height:1.5px;background:rgba(255,255,255,.8)"></div>
<div class="row" style="top:545px;height:41px;background:#fdc3c3">
<div class="a" style="left:119.30000000000001px;top:0;width:18.5px;height:41px;background:#12e624"></div>
<div class="cell" style="left:46px;width:72.19999999999999px;height:41px;line-height:42px;color:#111;"><span style="letter-spacing:0.45px"><span style="text-decoration:underline;text-decoration-color:#3a3a3a;text-decoration-thickness:1.5px;text-underline-offset:1.5px">74875</span></span></div>
<div class="cell" style="left:139px;width:145px;height:41px;line-height:42px;color:#111;">On The Way</div>
<div class="cell" style="left:285.5px;width:51.5px;height:41px;line-height:42px;color:#111;">INH</div>
<div class="cell" style="left:338.5px;width:111.5px;height:41px;line-height:42px;color:#111;letter-spacing:0.77px">02/24/2025</div>
<div class="cell" style="left:451.5px;width:84.79999999999995px;height:41px;line-height:42px;color:#111;letter-spacing:0.2px">12:00PM</div>
<div class="cell" style="left:538px;width:317px;height:41px;line-height:42px;color:#111">19 1st Ave., New York, NY 10003, Unit<span style="display:inline-block;transform:scaleX(.68);transform-origin:left">…</span></div>
<div class="cell" style="left:895px;width:317.29999999999995px;height:41px;line-height:42px;color:#111;">427 Anderson Ave, Fairview, NJ 07022<span style="display:inline-block;transform:scaleX(.68);transform-origin:left">…</span></div>
<div class="cell" style="left:1214px;width:51px;height:41px;line-height:42px;color:#111;">SUV</div>
<div class="cell" style="left:1266.5px;width:105.0px;height:41px;line-height:42px;color:#111;">Cadillac 8</div>
<div class="cell" style="left:1373px;width:145px;height:41px;line-height:42px;color:#111;">Kevin Henderson</div>
<div class="cell" style="left:1690.5px;width:124.5px;height:41px;line-height:42px;color:#111;">Point-to-Point</div>
<div class="cell" style="left:1816.5px;width:113.5px;height:41px;line-height:42px;color:#111;width:113px">Eagles Incorp.</div>
<div class="chip" style="left:1526px;top:7px"><svg width="20" height="20" viewBox="0 0 24 24" fill="none"><path d="M4 20v-6l2-5h7M4 14h14v6M4 18h14M7 14v6M15 14v6" stroke="#1c1c1c" stroke-width="2"/><path d="M17.5 2l5.5 9.5H12z" fill="#e02b2b"/><path d="M17.5 5v3.5" stroke="#fff" stroke-width="1.4"/></svg></div>
<div class="chip" style="left:1555px;top:7px"><svg width="20" height="20" viewBox="0 0 24 24" fill="none" stroke="#1c1c1c" stroke-width="2"><ellipse cx="12" cy="12" rx="10" ry="8"/><circle cx="8.5" cy="10.5" r=".8" fill="#1c1c1c"/><circle cx="15.5" cy="10.5" r=".8" fill="#1c1c1c"/><path d="M8.5 14c1 1.5 2 2 3.5 2s2.5-.5 3.5-2"/></svg></div>
<div class="chip" style="left:1584px;top:7px"><svg width="20" height="20" viewBox="0 0 24 24" fill="none" stroke="#1c1c1c" stroke-width="2"><circle cx="12" cy="3.5" r="1.5" fill="#1c1c1c"/><path d="M11 7v7h6l2 6M11 10h5"/><path d="M8 11a5.5 5.5 0 1 0 7 7.5"/></svg></div>
<div class="chip" style="left:1657px;top:7px;background:rgba(255,255,255,.6)"><svg width="20" height="20" viewBox="0 0 24 24" fill="none" stroke="#222" stroke-width="2.2" stroke-linejoin="round"><path d="M4 5.5a1.5 1.5 0 0 1 1.5-1.5h13a1.5 1.5 0 0 1 1.5 1.5V15l-5 5H5.5A1.5 1.5 0 0 1 4 18.5z"/><path d="M8 9h8M8 12.5h4"/><path d="M15 20v-4.5h5z" fill="#222"/></svg></div>
<div class="chip" style="left:9px;top:7px"><svg width="20" height="20" viewBox="0 0 24 24"><path d="M2 3.5h13v9l-3.5 3.5H2z" fill="none" stroke="#222" stroke-width="2"/><path d="M5 7h7M5 10h4" stroke="#222" stroke-width="1.8"/><circle cx="17" cy="17" r="6.5" fill="#d32f2f"/><path d="M17 13v4.5" stroke="#fff" stroke-width="2.2"/><circle cx="17" cy="20" r="1.1" fill="#fff"/></svg></div>
</div>
<div class="a" style="left:107px;top:584.5px;width:1930px;height:1.5px;background:rgba(255,255,255,.8)"></div>
<div class="row" style="top:586px;height:41px;background:#b0f85e">
<div class="a" style="left:119.30000000000001px;top:0;width:18.5px;height:41px;background:#12e624"></div>
<div class="cell" style="left:46px;width:72.19999999999999px;height:41px;line-height:42px;color:#111;"><span style="letter-spacing:0.45px"><span style="text-decoration:underline;text-decoration-color:#3a3a3a;text-decoration-thickness:1.5px;text-underline-offset:1.5px">20796</span></span></div>
<div class="cell" style="left:139px;width:145px;height:41px;line-height:42px;color:#111;">Assigned</div>
<div class="cell" style="left:285.5px;width:51.5px;height:41px;line-height:42px;color:#111;">INH</div>
<div class="cell" style="left:338.5px;width:111.5px;height:41px;line-height:42px;color:#111;letter-spacing:0.77px">02/24/2025</div>
<div class="cell" style="left:451.5px;width:84.79999999999995px;height:41px;line-height:42px;color:#111;letter-spacing:0.2px">12:30PM</div>
<div class="cell" style="left:538px;width:257px;height:41px;line-height:42px;color:#111">LGA, AA 998</div>
<div class="badge" style="left:800px;top:9px;width:48px;background:#2e7d32"><span>Outside</span></div>
<div class="cell" style="left:895px;width:317.29999999999995px;height:41px;line-height:42px;color:#111;">JFK</div>
<div class="cell" style="left:1214px;width:51px;height:41px;line-height:42px;color:#111;">SED</div>
<div class="cell" style="left:1266.5px;width:105.0px;height:41px;line-height:42px;color:#111;">MercedE 4</div>
<div class="cell" style="left:1373px;width:145px;height:41px;line-height:42px;color:#111;">Bo Best</div>
<div class="cell" style="left:1690.5px;width:124.5px;height:41px;line-height:42px;color:#111;">From Airport</div>
<div class="cell" style="left:1816.5px;width:113.5px;height:41px;line-height:42px;color:#111;width:113px">The Walt Disney</div>
</div>
<div class="a" style="left:107px;top:625.5px;width:1930px;height:1.5px;background:rgba(255,255,255,.8)"></div>
<div class="row" style="top:627px;height:41px;background:#ee9e4d">
<div class="a" style="left:119.30000000000001px;top:0;width:18.5px;height:41px;background:#f8fb00"></div>
<div class="cell" style="left:46px;width:72.19999999999999px;height:41px;line-height:42px;color:#111;"><span style="letter-spacing:0.45px"><span style="text-decoration:underline;text-decoration-color:#3a3a3a;text-decoration-thickness:1.5px;text-underline-offset:1.5px">43359</span></span></div>
<div class="cell" style="left:139px;width:145px;height:41px;line-height:42px;color:#111;">Dispatched</div>
<div class="cell" style="left:285.5px;width:51.5px;height:41px;line-height:42px;color:#111;">FOT</div>
<div class="cell" style="left:338.5px;width:111.5px;height:41px;line-height:42px;color:#111;letter-spacing:0.77px">02/24/2025</div>
<div class="cell" style="left:451.5px;width:84.79999999999995px;height:41px;line-height:42px;color:#111;letter-spacing:0.2px">12:30PM</div>
<div class="cell" style="left:538px;width:267px;height:41px;line-height:42px;color:#111">DXB</div>
<div class="badge" style="left:808px;top:9px;width:40px;background:#d32f2f"><span>Inside</span></div>
<div class="cell" style="left:895px;width:317.29999999999995px;height:41px;line-height:42px;color:#111;">2972 Westheimer Rd. Santa Ana</div>
<div class="cell" style="left:1214px;width:51px;height:41px;line-height:42px;color:#111;">SUV</div>
<div class="cell" style="left:1266.5px;width:105.0px;height:41px;line-height:42px;color:#111;">Cadillac 6</div>
<div class="cell" style="left:1373px;width:145px;height:41px;line-height:42px;color:#111;">Jesus Lowe</div>
<div class="cell" style="left:1690.5px;width:124.5px;height:41px;line-height:42px;color:#111;">From Airport</div>
<div class="cell" style="left:1816.5px;width:113.5px;height:41px;line-height:42px;color:#111;width:113px">Louis Vuitton</div>
<div class="chip" style="left:1526px;top:7px"><svg width="20" height="20" viewBox="0 0 24 24" fill="none"><path d="M13 21.5A9.5 9.5 0 1 1 21.5 12" stroke="#1c1c1c" stroke-width="2.2"/><path d="M12 6v6" stroke="#1c1c1c" stroke-width="2"/><path d="M18 13.5l5.5 9.5h-11z" fill="#e02b2b"/><path d="M18 16.5v3" stroke="#fff" stroke-width="1.4"/></svg></div>
<div class="chip" style="left:1555px;top:7px"><svg width="20" height="20" viewBox="0 0 24 24"><path d="M20 3c-1-.8-2.5-.3-3.3.5L13 7.3 4.5 5 3 6.5l7 4-3.5 3.5H4l-1 1 3.5 2 2 3.5 1-1V17l3.5-3.5 1 2" fill="#1c1c1c"/><path d="M17.5 12.5l5.5 9.5H12z" fill="#e02b2b"/><path d="M17.5 15.5v3" stroke="#fff" stroke-width="1.4"/></svg></div>
<div class="chip" style="left:1584px;top:7px"><svg width="22" height="22" viewBox="0 0 24 24" fill="none" style="left:2px;top:2px"><path d="M19 6A9 9 0 1 0 16.5 20" stroke="#1c1c1c" stroke-width="2.3"/><path d="M14.5 17l7 .5-4.5 5z" fill="#1c1c1c"/><path d="M9.5 12.5l12.5-3.5" stroke="#2e9e4e" stroke-width="1.6"/><path d="M10.5 15l11-3" stroke="#8fd89f" stroke-width="1.3"/></svg></div>
<div class="chip" style="left:1613px;top:7px;background:#fff;font-size:14px;font-weight:bold;color:#222;text-align:center;line-height:26px">+4</div>
<div class="chip" style="left:9px;top:7px"><svg width="20" height="20" viewBox="0 0 24 24"><circle cx="12" cy="12" r="10" fill="#d32f2f"/><path d="M12 6.5v7" stroke="#fff" stroke-width="2.6"/><circle cx="12" cy="17" r="1.5" fill="#fff"/></svg></div>
</div>
<div class="a" style="left:107px;top:666.5px;width:1930px;height:1.5px;background:rgba(255,255,255,.8)"></div>
<div class="row" style="top:668px;height:42px;background:#b0f85e">
<div class="a" style="left:119.30000000000001px;top:0;width:18.5px;height:42px;background:#12e624"></div>
<div class="cell" style="left:46px;width:72.19999999999999px;height:42px;line-height:43px;color:#111;"><span style="letter-spacing:0.45px"><span style="text-decoration:underline;text-decoration-color:#3a3a3a;text-decoration-thickness:1.5px;text-underline-offset:1.5px">61391</span></span></div>
<div class="cell" style="left:139px;width:145px;height:42px;line-height:43px;color:#111;">Assigned</div>
<div class="cell" style="left:285.5px;width:51.5px;height:42px;line-height:43px;color:#111;">FOT</div>
<div class="cell" style="left:338.5px;width:111.5px;height:42px;line-height:43px;color:#111;letter-spacing:0.77px">02/24/2025</div>
<div class="cell" style="left:451.5px;width:84.79999999999995px;height:42px;line-height:43px;color:#111;letter-spacing:0.2px">12:45PM</div>
<div class="cell" style="left:538px;width:317px;height:42px;line-height:43px;color:#111">Calle de Echegaray, 8, Centro, Madrid,<span style="display:inline-block;transform:scaleX(.68);transform-origin:left">…</span></div>
<div class="a" style="left:861px;top:7px;width:27px;height:26px;border-radius:5px;background:rgba(255,255,255,.6);font-size:14px;font-weight:bold;color:#222;text-align:center;line-height:26px">1</div>
<div class="cell" style="left:895px;width:317.29999999999995px;height:42px;line-height:43px;color:#111;">MAD</div>
<div class="cell" style="left:1214px;width:51px;height:42px;line-height:43px;color:#111;">SED</div>
<div class="cell" style="left:1266.5px;width:105.0px;height:42px;line-height:43px;color:#111;">Lincoln 9</div>
<div class="cell" style="left:1373px;width:145px;height:42px;line-height:43px;color:#111;">Braiden Potter</div>
<div class="cell" style="left:1690.5px;width:124.5px;height:42px;line-height:43px;color:#111;">To Airport</div>
<div class="cell" style="left:1816.5px;width:113.5px;height:42px;line-height:43px;color:#111;width:113px">Sony</div>
<div class="chip" style="left:1526px;top:7px"><svg width="20" height="20" viewBox="0 0 24 24"><path d="M12 2l8.8 5v10L12 22l-8.8-5V7z" fill="none" stroke="#222" stroke-width="2"/><path d="M15.8 8.3A4.9 4.9 0 1 0 16.8 13H12.3" fill="none" stroke="#18e018" stroke-width="3"/></svg></div>
</div>
<div class="a" style="left:107px;top:708.5px;width:1930px;height:1.5px;background:rgba(255,255,255,.8)"></div>
<div class="row" style="top:710px;height:41px;background:#b0f85e">
<div class="a" style="left:119.30000000000001px;top:0;width:18.5px;height:41px;background:#12e624"></div>
<div class="cell" style="left:46px;width:72.19999999999999px;height:41px;line-height:42px;color:#111;"><span style="letter-spacing:0.45px"><span style="text-decoration:underline;text-decoration-color:#3a3a3a;text-decoration-thickness:1.5px;text-underline-offset:1.5px">50963</span></span></div>
<div class="cell" style="left:139px;width:145px;height:41px;line-height:42px;color:#111;">Assigned</div>
<div class="cell" style="left:285.5px;width:51.5px;height:41px;line-height:42px;color:#111;">FOT</div>
<div class="cell" style="left:338.5px;width:111.5px;height:41px;line-height:42px;color:#111;letter-spacing:0.77px">02/24/2025</div>
<div class="cell" style="left:451.5px;width:84.79999999999995px;height:41px;line-height:42px;color:#111;letter-spacing:0.2px">01:00PM</div>
<div class="cell" style="left:538px;width:317px;height:41px;line-height:42px;color:#111">6391 Elgin St. Celina, Paris, FR</div>
<div class="cell" style="left:895px;width:317.29999999999995px;height:41px;line-height:42px;color:#111;">2972 Westheimer Rd. Santa Ana</div>
<div class="cell" style="left:1214px;width:51px;height:41px;line-height:42px;color:#111;">SED</div>
<div class="cell" style="left:1266.5px;width:105.0px;height:41px;line-height:42px;color:#111;">Lincoln 17</div>
<div class="cell" style="left:1373px;width:145px;height:41px;line-height:42px;color:#111;">Pierce Becker</div>
<div class="cell" style="left:1690.5px;width:124.5px;height:41px;line-height:42px;color:#111;">Point-to-Point</div>
<div class="cell" style="left:1816.5px;width:113.5px;height:41px;line-height:42px;color:#111;width:113px">Louis Vuitton</div>
</div>
<div class="a" style="left:107px;top:749.5px;width:1930px;height:1.5px;background:rgba(255,255,255,.8)"></div>
<div class="row" style="top:751px;height:41px;background:#b0fafb">
<div class="a" style="left:119.30000000000001px;top:0;width:18.5px;height:41px;background:#dddddd"></div>
<div class="cell" style="left:46px;width:72.19999999999999px;height:41px;line-height:42px;color:#111;"><span style="letter-spacing:0.45px"><span style="text-decoration:underline;text-decoration-color:#3a3a3a;text-decoration-thickness:1.5px;text-underline-offset:1.5px">50364</span></span></div>
<div class="cell" style="left:139px;width:145px;height:41px;line-height:42px;color:#111;">Unassigned</div>
<div class="cell" style="left:285.5px;width:51.5px;height:41px;line-height:42px;color:#111;">FOT</div>
<div class="cell" style="left:338.5px;width:111.5px;height:41px;line-height:42px;color:#111;letter-spacing:0.77px">02/24/2025</div>
<div class="cell" style="left:451.5px;width:84.79999999999995px;height:41px;line-height:42px;color:#111;letter-spacing:0.2px">02:30PM</div>
<div class="cell" style="left:538px;width:257px;height:41px;line-height:42px;color:#111">JFK, AA 2810</div>
<div class="badge" style="left:800px;top:9px;width:48px;background:#2e7d32"><span>Outside</span></div>
<div class="a" style="left:861px;top:7px;width:27px;height:26px;border-radius:5px;background:rgba(255,255,255,.6);font-size:14px;font-weight:bold;color:#222;text-align:center;line-height:26px">13</div>
<div class="cell" style="left:895px;width:317.29999999999995px;height:41px;line-height:42px;color:#111;">8502 Preston Rd. Inglewood, New Yor<span style="display:inline-block;transform:scaleX(.68);transform-origin:left">…</span></div>
<div class="cell" style="left:1214px;width:51px;height:41px;line-height:42px;color:#111;">SUV</div>
<div class="cell" style="left:1266.5px;width:105.0px;height:41px;line-height:42px;color:#111;">Cadillac 23</div>
<div class="cell" style="left:1373px;width:145px;height:41px;line-height:42px;color:#111;"></div>
<div class="cell" style="left:1690.5px;width:124.5px;height:41px;line-height:42px;color:#111;">From Airport</div>
<div class="cell" style="left:1816.5px;width:113.5px;height:41px;line-height:42px;color:#111;width:113px">The Walt Disney</div>
<div class="chip" style="left:1526px;top:7px"><svg width="20" height="20" viewBox="0 0 24 24"><circle cx="12" cy="12" r="9" fill="none" stroke="#222" stroke-width="2.2"/><path d="M12.3 6.2A5.8 5.8 0 1 1 7 15.6Q13.2 14 12.3 6.2Z" fill="#1c1c1c"/></svg></div>
<div class="chip" style="left:1555px;top:7px"><svg width="20" height="20" viewBox="0 0 24 24" fill="none" stroke="#222" stroke-width="2" stroke-linejoin="round"><path d="M5.5 5.5h11l2 2-2 2h-11z" fill="#d4dede"/><path d="M18.5 11.5h-11l-2 2 2 2h11z" fill="#d4dede"/><path d="M12 3v18"/></svg></div>
<div class="chip" style="left:1584px;top:7px"><svg width="20" height="20" viewBox="0 0 24 24"><path d="M12 2l8.8 5v10L12 22l-8.8-5V7z" fill="none" stroke="#222" stroke-width="2"/><path d="M15.8 8.3A4.9 4.9 0 1 0 16.8 13H12.3" fill="none" stroke="#18e018" stroke-width="3"/></svg></div>
</div>
<div class="a" style="left:107px;top:790.5px;width:1930px;height:1.5px;background:rgba(255,255,255,.8)"></div>
<div class="row" style="top:792px;height:41px;background:#b0fafb">
<div class="a" style="left:119.30000000000001px;top:0;width:18.5px;height:41px;background:#dddddd"></div>
<div class="cell" style="left:46px;width:72.19999999999999px;height:41px;line-height:42px;color:#111;"><span style="letter-spacing:0.45px"><span style="text-decoration:underline;text-decoration-color:#3a3a3a;text-decoration-thickness:1.5px;text-underline-offset:1.5px">45904</span></span></div>
<div class="cell" style="left:139px;width:145px;height:41px;line-height:42px;color:#111;">Unassigned</div>
<div class="cell" style="left:285.5px;width:51.5px;height:41px;line-height:42px;color:#111;">FIN</div>
<div class="cell" style="left:338.5px;width:111.5px;height:41px;line-height:42px;color:#111;letter-spacing:0.77px">02/24/2025</div>
<div class="cell" style="left:451.5px;width:84.79999999999995px;height:41px;line-height:42px;color:#111;letter-spacing:0.2px">03:00PM</div>
<div class="cell" style="left:538px;width:317px;height:41px;line-height:42px;color:#111">2118 Thornridge Cir. Syracuse, New Y<span style="display:inline-block;transform:scaleX(.68);transform-origin:left">…</span></div>
<div class="cell" style="left:895px;width:317.29999999999995px;height:41px;line-height:42px;color:#111;">LGA</div>
<div class="cell" style="left:1214px;width:51px;height:41px;line-height:42px;color:#111;">SED</div>
<div class="cell" style="left:1266.5px;width:105.0px;height:41px;line-height:42px;color:#111;"></div>
<div class="cell" style="left:1373px;width:145px;height:41px;line-height:42px;color:#111;">Kristin Zavala</div>
<div class="cell" style="left:1690.5px;width:124.5px;height:41px;line-height:42px;color:#111;">To Airport</div>
<div class="cell" style="left:1816.5px;width:113.5px;height:41px;line-height:42px;color:#111;width:113px">MasterCard</div>
<div class="chip" style="left:1526px;top:7px"><svg width="20" height="20" viewBox="0 0 24 24"><circle cx="12" cy="12" r="9" fill="none" stroke="#222" stroke-width="2.2"/><path d="M12.3 6.2A5.8 5.8 0 1 1 7 15.6Q13.2 14 12.3 6.2Z" fill="#1c1c1c"/></svg></div>
<div class="chip" style="left:1657px;top:7px;background:rgba(255,255,255,.6)"><svg width="20" height="20" viewBox="0 0 24 24" fill="none" stroke="#222" stroke-width="2.2" stroke-linejoin="round"><path d="M4 5.5a1.5 1.5 0 0 1 1.5-1.5h13a1.5 1.5 0 0 1 1.5 1.5V15l-5 5H5.5A1.5 1.5 0 0 1 4 18.5z"/><path d="M8 9h8M8 12.5h4"/><path d="M15 20v-4.5h5z" fill="#222"/></svg></div>
</div>
<div class="a" style="left:107px;top:831.5px;width:1930px;height:1.5px;background:rgba(255,255,255,.8)"></div>
<div class="row" style="top:833px;height:41px;background:#ee9e4d">
<div class="a" style="left:119.30000000000001px;top:0;width:18.5px;height:41px;background:#f8fb00"></div>
<div class="cell" style="left:46px;width:72.19999999999999px;height:41px;line-height:42px;color:#111;"><span style="letter-spacing:0.45px"><span style="text-decoration:underline;text-decoration-color:#3a3a3a;text-decoration-thickness:1.5px;text-underline-offset:1.5px">23340</span></span></div>
<div class="cell" style="left:139px;width:145px;height:41px;line-height:42px;color:#111;">Dispatched</div>
<div class="cell" style="left:285.5px;width:51.5px;height:41px;line-height:42px;color:#111;">FIN</div>
<div class="cell" style="left:338.5px;width:111.5px;height:41px;line-height:42px;color:#111;letter-spacing:0.77px">02/24/2025</div>
<div class="cell" style="left:451.5px;width:84.79999999999995px;height:41px;line-height:42px;color:#111;letter-spacing:0.2px">04:15PM</div>
<div class="cell" style="left:538px;width:257px;height:41px;line-height:42px;color:#111">JFK, AA 1918</div>
<div class="badge" style="left:800px;top:9px;width:48px;background:#2e7d32"><span>Outside</span></div>
<div class="cell" style="left:895px;width:317.29999999999995px;height:41px;line-height:42px;color:#111;">1901 Thornridge Cir. Shiloh, New York,<span style="display:inline-block;transform:scaleX(.68);transform-origin:left">…</span></div>
<div class="cell" style="left:1214px;width:51px;height:41px;line-height:42px;color:#111;">SED</div>
<div class="cell" style="left:1266.5px;width:105.0px;height:41px;line-height:42px;color:#111;">MercedE 7</div>
<div class="cell" style="left:1373px;width:145px;height:41px;line-height:42px;color:#111;">Elliot Spencer</div>
<div class="cell" style="left:1690.5px;width:124.5px;height:41px;line-height:42px;color:#111;">From Airport</div>
<div class="cell" style="left:1816.5px;width:113.5px;height:41px;line-height:42px;color:#111;width:113px">eBay</div>
</div>
<div class="a" style="left:107px;top:872.5px;width:1930px;height:1.5px;background:rgba(255,255,255,.8)"></div>
<div class="row" style="top:874px;height:41px;background:#8b1912">
<div class="a" style="left:119.30000000000001px;top:0;width:18.5px;height:41px;background:#dddddd"></div>
<div class="cell" style="left:46px;width:72.19999999999999px;height:41px;line-height:42px;color:#140202;"><span style="letter-spacing:0.45px"><span style="text-decoration:underline;text-decoration-color:#140202;text-decoration-thickness:1.5px;text-underline-offset:1.5px">28200</span></span></div>
<div class="cell" style="left:139px;width:145px;height:41px;line-height:42px;color:#140202;">Canceled</div>
<div class="cell" style="left:285.5px;width:51.5px;height:41px;line-height:42px;color:#140202;">INH</div>
<div class="cell" style="left:338.5px;width:111.5px;height:41px;line-height:42px;color:#140202;letter-spacing:0.77px">02/24/2025</div>
<div class="cell" style="left:451.5px;width:84.79999999999995px;height:41px;line-height:42px;color:#140202;letter-spacing:0.2px">04:15PM</div>
<div class="cell" style="left:538px;width:317px;height:41px;line-height:42px;color:#140202">2715 Ash Dr. San Jose, New York, US</div>
<div class="cell" style="left:895px;width:317.29999999999995px;height:41px;line-height:42px;color:#140202;">8502 Preston Rd. Inglewood, New Yor<span style="display:inline-block;transform:scaleX(.68);transform-origin:left">…</span></div>
<div class="cell" style="left:1214px;width:51px;height:41px;line-height:42px;color:#140202;">SED</div>
<div class="cell" style="left:1266.5px;width:105.0px;height:41px;line-height:42px;color:#140202;"></div>
<div class="cell" style="left:1373px;width:145px;height:41px;line-height:42px;color:#140202;"></div>
<div class="cell" style="left:1690.5px;width:124.5px;height:41px;line-height:42px;color:#140202;">Point-to-Point</div>
<div class="cell" style="left:1816.5px;width:113.5px;height:41px;line-height:42px;color:#140202;width:113px">MasterCard</div>
<div class="chip" style="left:1657px;top:7px;background:rgba(255,255,255,.55)"><svg width="20" height="20" viewBox="0 0 24 24" fill="none" stroke="#222" stroke-width="2.2" stroke-linejoin="round"><path d="M4 5.5a1.5 1.5 0 0 1 1.5-1.5h13a1.5 1.5 0 0 1 1.5 1.5V15l-5 5H5.5A1.5 1.5 0 0 1 4 18.5z"/><path d="M8 9h8M8 12.5h4"/><path d="M15 20v-4.5h5z" fill="#222"/></svg></div>
</div>
<div class="a" style="left:107px;top:913.5px;width:1930px;height:1.5px;background:rgba(255,255,255,.8)"></div>
<div class="row" style="top:915px;height:42px;background:#b0fafb">
<div class="a" style="left:119.30000000000001px;top:0;width:18.5px;height:42px;background:#dddddd"></div>
<div class="cell" style="left:46px;width:72.19999999999999px;height:42px;line-height:43px;color:#111;"><span style="letter-spacing:0.45px"><span style="text-decoration:underline;text-decoration-color:#3a3a3a;text-decoration-thickness:1.5px;text-underline-offset:1.5px">18599</span></span></div>
<div class="cell" style="left:139px;width:145px;height:42px;line-height:43px;color:#111;">Unassigned</div>
<div class="cell" style="left:285.5px;width:51.5px;height:42px;line-height:43px;color:#111;">INH</div>
<div class="cell" style="left:338.5px;width:111.5px;height:42px;line-height:43px;color:#111;letter-spacing:0.77px">02/24/2025</div>
<div class="cell" style="left:451.5px;width:84.79999999999995px;height:42px;line-height:43px;color:#111;letter-spacing:0.2px">04:30PM</div>
<div class="cell" style="left:538px;width:317px;height:42px;line-height:43px;color:#111">4517 Washington Ave. Manchester, N<span style="display:inline-block;transform:scaleX(.68);transform-origin:left">…</span></div>
<div class="cell" style="left:895px;width:317.29999999999995px;height:42px;line-height:43px;color:#111;">2464 Royal Ln. Mesa, Boston, US</div>
<div class="cell" style="left:1214px;width:51px;height:42px;line-height:43px;color:#111;">SED</div>
<div class="cell" style="left:1266.5px;width:105.0px;height:42px;line-height:43px;color:#111;"></div>
<div class="cell" style="left:1373px;width:145px;height:42px;line-height:43px;color:#111;"></div>
<div class="cell" style="left:1690.5px;width:124.5px;height:42px;line-height:43px;color:#111;">Hourly</div>
<div class="cell" style="left:1816.5px;width:113.5px;height:42px;line-height:43px;color:#111;width:113px">Bank of America</div>
<div class="chip" style="left:1526px;top:7px"><svg width="20" height="20" viewBox="0 0 24 24"><circle cx="12" cy="12" r="9" fill="none" stroke="#222" stroke-width="2.2"/><path d="M12.3 6.2A5.8 5.8 0 1 1 7 15.6Q13.2 14 12.3 6.2Z" fill="#1c1c1c"/></svg></div>
</div>
<div class="a" style="left:107px;top:955.5px;width:1930px;height:1.5px;background:rgba(255,255,255,.8)"></div>
<div class="row" style="top:957px;height:41px;background:#b0fafb">
<div class="a" style="left:119.30000000000001px;top:0;width:18.5px;height:41px;background:#dddddd"></div>
<div class="cell" style="left:46px;width:72.19999999999999px;height:41px;line-height:42px;color:#111;"><span style="letter-spacing:0.45px"><span style="text-decoration:underline;text-decoration-color:#3a3a3a;text-decoration-thickness:1.5px;text-underline-offset:1.5px">20079</span></span></div>
<div class="cell" style="left:139px;width:145px;height:41px;line-height:42px;color:#111;">Unassigned</div>
<div class="cell" style="left:285.5px;width:51.5px;height:41px;line-height:42px;color:#111;">FOT</div>
<div class="cell" style="left:338.5px;width:111.5px;height:41px;line-height:42px;color:#111;letter-spacing:0.77px">02/24/2025</div>
<div class="cell" style="left:451.5px;width:84.79999999999995px;height:41px;line-height:42px;color:#111;letter-spacing:0.2px">04:30PM</div>
<div class="cell" style="left:538px;width:317px;height:41px;line-height:42px;color:#111">2972 Westheimer Rd. Santa Ana, Lon<span style="display:inline-block;transform:scaleX(.68);transform-origin:left">…</span></div>
<div class="cell" style="left:895px;width:317.29999999999995px;height:41px;line-height:42px;color:#111;">1901 Thornridge Cir. Shiloh, London, UK</div>
<div class="cell" style="left:1214px;width:51px;height:41px;line-height:42px;color:#111;">SED</div>
<div class="cell" style="left:1266.5px;width:105.0px;height:41px;line-height:42px;color:#111;"></div>
<div class="cell" style="left:1373px;width:145px;height:41px;line-height:42px;color:#111;">Mollie Morris</div>
<div class="cell" style="left:1690.5px;width:124.5px;height:41px;line-height:42px;color:#111;">Point-to-Point</div>
<div class="cell" style="left:1816.5px;width:113.5px;height:41px;line-height:42px;color:#111;width:113px">L’Oréal</div>
<div class="chip" style="left:1526px;top:7px"><svg width="20" height="20" viewBox="0 0 24 24" fill="none" stroke="#1c1c1c" stroke-width="2"><ellipse cx="12" cy="12" rx="10" ry="8"/><circle cx="8.5" cy="10.5" r=".8" fill="#1c1c1c"/><circle cx="15.5" cy="10.5" r=".8" fill="#1c1c1c"/><path d="M8.5 14c1 1.5 2 2 3.5 2s2.5-.5 3.5-2"/></svg></div>
<div class="chip" style="left:1555px;top:7px"><svg width="22" height="22" viewBox="0 0 24 24" fill="none" style="left:2px;top:2px"><path d="M19 6A9 9 0 1 0 16.5 20" stroke="#1c1c1c" stroke-width="2.3"/><path d="M14.5 17l7 .5-4.5 5z" fill="#1c1c1c"/><path d="M9.5 12.5l12.5-3.5" stroke="#2e9e4e" stroke-width="1.6"/><path d="M10.5 15l11-3" stroke="#8fd89f" stroke-width="1.3"/></svg></div>
<div class="chip" style="left:1657px;top:7px;background:rgba(255,255,255,.6)"><svg width="20" height="20" viewBox="0 0 24 24" fill="none" stroke="#222" stroke-width="2.2" stroke-linejoin="round"><path d="M4 5.5a1.5 1.5 0 0 1 1.5-1.5h13a1.5 1.5 0 0 1 1.5 1.5V15l-5 5H5.5A1.5 1.5 0 0 1 4 18.5z"/><path d="M8 9h8M8 12.5h4"/><path d="M15 20v-4.5h5z" fill="#222"/></svg></div>
</div>
<div class="a" style="left:107px;top:996.5px;width:1930px;height:1.5px;background:rgba(255,255,255,.8)"></div>
<div class="row" style="top:998px;height:41px;background:#ee9e4d">
<div class="a" style="left:119.30000000000001px;top:0;width:18.5px;height:41px;background:#f8fb00"></div>
<div class="cell" style="left:46px;width:72.19999999999999px;height:41px;line-height:42px;color:#111;"><span style="letter-spacing:0.45px"><span style="text-decoration:underline;text-decoration-color:#3a3a3a;text-decoration-thickness:1.5px;text-underline-offset:1.5px">39235</span></span></div>
<div class="cell" style="left:139px;width:145px;height:41px;line-height:42px;color:#111;">Dispatched</div>
<div class="cell" style="left:285.5px;width:51.5px;height:41px;line-height:42px;color:#111;">FOT</div>
<div class="cell" style="left:338.5px;width:111.5px;height:41px;line-height:42px;color:#111;letter-spacing:0.77px">02/24/2025</div>
<div class="cell" style="left:451.5px;width:84.79999999999995px;height:41px;line-height:42px;color:#111;letter-spacing:0.2px">05:00PM</div>
<div class="cell" style="left:538px;width:267px;height:41px;line-height:42px;color:#111">Boston Logan International Airpo<span style="display:inline-block;transform:scaleX(.68);transform-origin:left">…</span></div>
<div class="badge" style="left:808px;top:9px;width:40px;background:#d32f2f"><span>Inside</span></div>
<div class="cell" style="left:895px;width:317.29999999999995px;height:41px;line-height:42px;color:#111;">6391 Elgin St. Celina, Boston, US</div>
<div class="cell" style="left:1214px;width:51px;height:41px;line-height:42px;color:#111;">SUV</div>
<div class="cell" style="left:1266.5px;width:105.0px;height:41px;line-height:42px;color:#111;">Cadillac 2</div>
<div class="cell" style="left:1373px;width:145px;height:41px;line-height:42px;color:#111;">Marlee Merritt</div>
<div class="cell" style="left:1690.5px;width:124.5px;height:41px;line-height:42px;color:#111;">From Airport</div>
<div class="cell" style="left:1816.5px;width:113.5px;height:41px;line-height:42px;color:#111;width:113px">McDonald’s</div>
</div>
<div class="a" style="left:107px;top:1037.5px;width:1930px;height:1.5px;background:rgba(255,255,255,.8)"></div>
<div class="row" style="top:1039px;height:41px;background:#b0fafb">
<div class="a" style="left:119.30000000000001px;top:0;width:18.5px;height:41px;background:#dddddd"></div>
<div class="cell" style="left:46px;width:72.19999999999999px;height:41px;line-height:42px;color:#111;"><span style="letter-spacing:0.45px"><span style="text-decoration:underline;text-decoration-color:#3a3a3a;text-decoration-thickness:1.5px;text-underline-offset:1.5px">16415</span></span></div>
<div class="cell" style="left:139px;width:145px;height:41px;line-height:42px;color:#111;">Unassigned</div>
<div class="cell" style="left:285.5px;width:51.5px;height:41px;line-height:42px;color:#111;">FOT</div>
<div class="cell" style="left:338.5px;width:111.5px;height:41px;line-height:42px;color:#111;letter-spacing:0.77px">02/24/2025</div>
<div class="cell" style="left:451.5px;width:84.79999999999995px;height:41px;line-height:42px;color:#111;letter-spacing:0.2px">05:30PM</div>
<div class="cell" style="left:538px;width:317px;height:41px;line-height:42px;color:#111">8502 Preston Rd. Inglewood, Boston,<span style="display:inline-block;transform:scaleX(.68);transform-origin:left">…</span></div>
<div class="cell" style="left:895px;width:317.29999999999995px;height:41px;line-height:42px;color:#111;">8502 Preston Rd. Inglewood, Boston<span style="display:inline-block;transform:scaleX(.68);transform-origin:left">…</span></div>
<div class="cell" style="left:1214px;width:51px;height:41px;line-height:42px;color:#111;">SED</div>
<div class="cell" style="left:1266.5px;width:105.0px;height:41px;line-height:42px;color:#111;"></div>
<div class="cell" style="left:1373px;width:145px;height:41px;line-height:42px;color:#111;"></div>
<div class="cell" style="left:1690.5px;width:124.5px;height:41px;line-height:42px;color:#111;">Point-to-Point</div>
<div class="cell" style="left:1816.5px;width:113.5px;height:41px;line-height:42px;color:#111;width:113px">Mitsubishi</div>
<div class="chip" style="left:1526px;top:7px"><svg width="20" height="20" viewBox="0 0 24 24" fill="none" stroke="#1c1c1c" stroke-width="2" stroke-linejoin="round"><path d="M12 3l8 6-8 6-8-6z"/><path d="M4 13l8 6 8-6"/></svg></div>
</div>
<div class="a" style="left:107px;top:1078.5px;width:1930px;height:1.5px;background:rgba(255,255,255,.8)"></div>
<div class="row" style="top:1080px;height:41px;background:#b0fafb">
<div class="a" style="left:119.30000000000001px;top:0;width:18.5px;height:41px;background:#dddddd"></div>
<div class="cell" style="left:46px;width:72.19999999999999px;height:41px;line-height:42px;color:#111;"><span style="letter-spacing:0.45px"><span style="text-decoration:underline;text-decoration-color:#3a3a3a;text-decoration-thickness:1.5px;text-underline-offset:1.5px">45904</span></span></div>
<div class="cell" style="left:139px;width:145px;height:41px;line-height:42px;color:#111;">Unassigned</div>
<div class="cell" style="left:285.5px;width:51.5px;height:41px;line-height:42px;color:#111;">INH</div>
<div class="cell" style="left:338.5px;width:111.5px;height:41px;line-height:42px;color:#111;letter-spacing:0.77px">02/24/2025</div>
<div class="cell" style="left:451.5px;width:84.79999999999995px;height:41px;line-height:42px;color:#111;letter-spacing:0.2px">06:00PM</div>
<div class="cell" style="left:538px;width:317px;height:41px;line-height:42px;color:#111">2118 Thornridge Cir. Syracuse, New Y<span style="display:inline-block;transform:scaleX(.68);transform-origin:left">…</span></div>
<div class="cell" style="left:895px;width:317.29999999999995px;height:41px;line-height:42px;color:#111;">LGA</div>
<div class="cell" style="left:1214px;width:51px;height:41px;line-height:42px;color:#111;">SUV</div>
<div class="cell" style="left:1266.5px;width:105.0px;height:41px;line-height:42px;color:#111;"></div>
<div class="cell" style="left:1373px;width:145px;height:41px;line-height:42px;color:#111;"></div>
<div class="cell" style="left:1690.5px;width:124.5px;height:41px;line-height:42px;color:#111;">To Airport</div>
<div class="cell" style="left:1816.5px;width:113.5px;height:41px;line-height:42px;color:#111;width:113px">IBM</div>
<div class="chip" style="left:9px;top:7px"><svg width="20" height="20" viewBox="0 0 24 24"><circle cx="12" cy="12" r="10" fill="#d32f2f"/><path d="M12 6.5v7" stroke="#fff" stroke-width="2.6"/><circle cx="12" cy="17" r="1.5" fill="#fff"/></svg></div>
</div>
<div class="a" style="left:107px;top:1119.5px;width:1930px;height:1.5px;background:rgba(255,255,255,.8)"></div>
<div class="row" style="top:1121px;height:40px;background:#b0fafb">
<div class="a" style="left:119.30000000000001px;top:0;width:18.5px;height:40px;background:#dddddd"></div>
<div class="cell" style="left:46px;width:72.19999999999999px;height:40px;line-height:41px;color:#111;"><span style="letter-spacing:0.45px"><span style="text-decoration:underline;text-decoration-color:#3a3a3a;text-decoration-thickness:1.5px;text-underline-offset:1.5px">43359</span></span></div>
<div class="cell" style="left:139px;width:145px;height:40px;line-height:41px;color:#111;">Unassigned</div>
<div class="cell" style="left:285.5px;width:51.5px;height:40px;line-height:41px;color:#111;">INH</div>
<div class="cell" style="left:338.5px;width:111.5px;height:40px;line-height:41px;color:#111;letter-spacing:0.77px">02/24/2025</div>
<div class="cell" style="left:451.5px;width:84.79999999999995px;height:40px;line-height:41px;color:#111;letter-spacing:0.2px">06:30PM</div>
<div class="cell" style="left:538px;width:317px;height:40px;line-height:41px;color:#111">3891 Ranchview Dr. Richardson, Calif<span style="display:inline-block;transform:scaleX(.68);transform-origin:left">…</span></div>
<div class="cell" style="left:895px;width:317.29999999999995px;height:40px;line-height:41px;color:#111;">3517 W. Gray St. Utica, New York, US</div>
<div class="cell" style="left:1214px;width:51px;height:40px;line-height:41px;color:#111;">SED</div>
<div class="cell" style="left:1266.5px;width:105.0px;height:40px;line-height:41px;color:#111;"></div>
<div class="cell" style="left:1373px;width:145px;height:40px;line-height:41px;color:#111;">Marco Soto</div>
<div class="cell" style="left:1690.5px;width:124.5px;height:40px;line-height:41px;color:#111;">Point-to-Point</div>
<div class="cell" style="left:1816.5px;width:113.5px;height:40px;line-height:41px;color:#111;width:113px">eBay</div>
</div>
<div class="a" style="left:151px;top:257px;width:2px;height:904px;background:rgba(255,255,255,.8)"></div>
<div class="a" style="left:225.2px;top:257px;width:1.4px;height:904px;background:rgba(255,255,255,.8)"></div>
<div class="a" style="left:244.8px;top:257px;width:1.4px;height:904px;background:rgba(255,255,255,.8)"></div>
<div class="a" style="left:391px;top:257px;width:1.4px;height:904px;background:rgba(255,255,255,.8)"></div>
<div class="a" style="left:444px;top:257px;width:1.4px;height:904px;background:rgba(255,255,255,.8)"></div>
<div class="a" style="left:557px;top:257px;width:1.4px;height:904px;background:rgba(255,255,255,.8)"></div>
<div class="a" style="left:643.3px;top:257px;width:1.4px;height:904px;background:rgba(255,255,255,.8)"></div>
<div class="a" style="left:962px;top:257px;width:1.4px;height:904px;background:rgba(255,255,255,.8)"></div>
<div class="a" style="left:1000.5px;top:257px;width:1.4px;height:904px;background:rgba(255,255,255,.8)"></div>
<div class="a" style="left:1319.3px;top:257px;width:1.4px;height:904px;background:rgba(255,255,255,.8)"></div>
<div class="a" style="left:1372px;top:257px;width:1.4px;height:904px;background:rgba(255,255,255,.8)"></div>
<div class="a" style="left:1478.5px;top:257px;width:1.4px;height:904px;background:rgba(255,255,255,.8)"></div>
<div class="a" style="left:1625px;top:257px;width:1.4px;height:904px;background:rgba(255,255,255,.8)"></div>
<div class="a" style="left:1757px;top:257px;width:1.4px;height:904px;background:rgba(255,255,255,.8)"></div>
<div class="a" style="left:1796px;top:257px;width:1.4px;height:904px;background:rgba(255,255,255,.8)"></div>
<div class="a" style="left:1922px;top:257px;width:1.4px;height:904px;background:rgba(255,255,255,.8)"></div>
<div class="a" style="left:153px;top:218px;width:13px;height:943px;background:linear-gradient(90deg,rgba(0,0,0,.11),rgba(0,0,0,0))"></div>
<div class="a" style="left:107px;top:1161px;width:64px;height:11px;background:linear-gradient(180deg,rgba(0,0,0,.14),rgba(0,0,0,.03));-webkit-mask-image:linear-gradient(90deg,#000 60%,transparent)"></div>
<div class="a" style="left:2021px;top:171px;width:16px;height:990px;background:linear-gradient(90deg,rgba(0,0,0,0),rgba(0,0,0,.08))"></div>
<div class="a" style="left:2037px;top:170px;width:517px;height:1020px;overflow:hidden;background:#f4f4f4">
<svg class="a" style="left:0;top:0" width="517" height="1020" viewBox="2037 170 517 1020">
<path d="M2030.0 490.0 L2040.0 500.0 L2046.0 520.0 L2046.0 545.0 L2047.0 580.0 L2046.8 623.5 L2049.0 666.7 L2053.0 689.0 L2105.3 724.0 L2116.0 732.0 L2118.6 739.9 L2123.3 747.9 L2124.6 754.6 L2130.6 761.2 L2133.2 773.2 L2139.9 777.2 L2149.2 786.5 L2147.9 793.1 L2139.9 795.8 L2154.5 806.4 L2165.2 811.8 L2169.2 818.4 L2167.8 827.7 L2183.8 841.0 L2187.8 847.7 L2190.4 849.0 L2195.8 843.7 L2190.4 835.7 L2185.1 834.4 L2183.8 826.4 L2176.5 811.8 L2167.8 803.8 L2162.5 795.8 L2161.2 789.2 L2153.2 778.5 L2146.5 773.2 L2142.6 763.9 L2141.9 750.6 L2158.5 757.2 L2159.8 765.2 L2167.8 779.8 L2165.2 783.8 L2171.8 785.2 L2182.5 794.5 L2186.4 802.5 L2194.4 807.8 L2198.4 813.1 L2195.8 817.8 L2205.1 822.4 L2210.4 827.7 L2210.4 830.4 L2219.7 837.0 L2230.3 851.7 L2234.3 861.0 L2237.0 865.0 L2234.3 880.0 L2240.0 888.0 L2253.3 896.0 L2273.2 902.6 L2290.5 913.2 L2306.5 919.8 L2325.0 925.2 L2341.0 931.8 L2365.0 937.0 L2386.3 945.0 L2402.3 950.4 L2423.5 963.7 L2430.2 974.4 L2431.5 982.4 L2439.5 985.0 L2452.8 993.0 L2458.0 1001.0 L2474.0 1006.3 L2484.7 1009.0 L2483.4 1003.6 L2492.7 997.0 L2503.3 1001.0 L2506.0 1006.3 L2514.0 1006.3 L2515.4 999.2 L2511.0 1016.8 L2513.2 1032.0 L2511.0 1051.9 L2495.0 1075.0 L2485.0 1095.0 L2476.0 1122.0 L2476.0 1137.4 L2484.7 1159.4 L2500.0 1174.7 L2504.4 1195.0 L2030.0 1195.0Z" fill="#d5dfe6"/>
<path d="M2560.0 637.7 L2547.6 641.7 L2539.6 659.7 L2541.6 679.6 L2535.6 699.5 L2523.7 711.5 L2507.7 719.5 L2499.0 725.7 L2486.0 738.7 L2475.4 751.7 L2473.0 764.6 L2477.5 782.0 L2484.0 799.0 L2486.0 814.0 L2479.7 823.0 L2473.0 818.7 L2466.7 803.5 L2460.0 786.0 L2451.6 773.0 L2438.6 771.0 L2425.7 765.7 L2399.7 766.8 L2386.8 771.0 L2378.0 777.6 L2360.8 773.3 L2339.2 777.6 L2324.0 786.0 L2315.5 797.0 L2313.3 818.7 L2311.0 840.0 L2311.8 860.0 L2318.5 873.3 L2325.0 888.0 L2339.7 893.2 L2343.7 900.0 L2359.7 894.6 L2373.0 896.0 L2383.6 884.0 L2386.3 868.0 L2399.6 864.0 L2415.6 862.7 L2419.5 868.0 L2414.2 877.3 L2412.9 886.6 L2408.9 900.0 L2405.0 913.2 L2424.9 914.5 L2431.5 919.8 L2443.5 922.5 L2450.0 927.8 L2455.5 934.5 L2452.8 946.4 L2450.0 963.7 L2447.5 971.7 L2452.8 977.0 L2459.4 985.0 L2471.4 990.3 L2482.0 993.0 L2492.7 987.7 L2500.7 985.0 L2511.3 987.7 L2512.6 995.7 L2519.3 993.0 L2528.6 987.7 L2530.0 979.7 L2539.2 973.0 L2560.0 970.4Z" fill="#d5dfe6"/>
<path d="M2440.3 858.7 L2450.8 850.3 L2467.5 848.2 L2480.0 854.5 L2496.8 860.8 L2517.8 869.1 L2538.7 873.3 L2551.3 879.6 L2538.7 882.5 L2513.6 880.5 L2496.8 874.3 L2471.7 866.0 L2455.0 861.8 L2444.0 862.0Z" fill="#f4f4f4"/>
<path d="M2505.0 897.5 L2515.0 896.0 L2523.0 899.5 L2512.0 901.5Z" fill="#f4f4f4"/>
<path d="M2541.0 894.0 L2556.0 891.0 L2556.0 899.0 L2545.0 899.0Z" fill="#f4f4f4"/>
<path d="M2505.0 827.0 L2509.0 830.0 L2512.0 840.0 L2507.0 838.0Z" fill="#f4f4f4"/>
<path d="M2340.3 352.7 L2341.4 320.3 L2347.9 303.0 L2360.8 285.7 L2367.3 279.2 L2380.3 270.6 L2382.4 259.8 L2388.9 250.0 L2406.2 246.8 L2414.9 223.0 L2404.1 218.7 L2388.9 207.9 L2395.4 205.7 L2417.0 218.7 L2425.7 207.9 L2421.4 199.3 L2423.5 190.6 L2434.3 188.5 L2438.6 182.0 L2473.2 182.0 L2475.4 169.0 L2557.5 169.0 L2557.5 285.7 L2544.5 286.8 L2522.9 281.4 L2505.6 283.5 L2507.8 298.7 L2505.6 320.3 L2510.0 337.6 L2500.2 359.2 L2514.3 374.3 L2520.8 391.6 L2520.8 406.7 L2510.0 419.7 L2503.5 430.5 L2430.0 430.5 L2412.7 408.9 L2397.6 398.1 L2378.1 387.3 L2363.0 391.6 L2358.7 363.5 L2352.2 359.2Z" fill="#d5dfe6"/>
<path d="M2415.9 255.4 L2425.7 249.0 L2425.7 223.0 L2427.8 212.2 L2434.3 207.9 L2447.3 220.9 L2466.7 233.8 L2471.1 249.0 L2481.9 253.3 L2479.7 261.9 L2468.9 259.8 L2451.6 253.3 L2443.0 264.1 L2434.3 270.6 L2430.0 259.8 L2420.3 259.8Z" fill="#f4f4f4"/>
<path d="M2504.6 231.7 L2514.3 223.0 L2529.4 218.7 L2546.7 215.5 L2557.5 212.2 L2557.5 240.3 L2542.4 238.2 L2529.4 240.3 L2520.8 244.6 L2507.8 240.3Z" fill="#f4f4f4"/>
<path d="M2542.4 197.1 L2548.9 186.3 L2557.5 182.0 L2557.5 212.2 L2548.9 214.4 L2542.4 207.9Z" fill="#f4f4f4"/>
<path d="M2449.4 277.1 L2464.6 272.7 L2467.8 277.1 L2458.1 287.9 L2450.5 288.9Z" fill="#f4f4f4"/>
<path d="M2486.2 286.8 L2492.7 285.7 L2493.8 294.4 L2489.4 300.8 L2485.1 294.4Z" fill="#f4f4f4"/>
<path d="M2503.5 264.1 L2510.0 261.9 L2512.1 268.4 L2506.7 269.5Z" fill="#f4f4f4"/>
<path d="M2505.6 283.5 L2522.9 281.4 L2544.5 286.8 L2557.5 285.7 L2557.5 430.5 L2503.5 430.5 L2510.0 419.7 L2520.8 406.7 L2520.8 391.6 L2514.3 374.3 L2500.2 359.2 L2510.0 337.6 L2505.6 320.3 L2507.8 298.7Z" fill="#f4f4f4"/>
<path d="M2370.0 386.0 L2378.0 387.3 L2397.5 392.8 L2410.3 406.8 L2428.9 414.9 L2437.0 421.9 L2463.8 424.2 L2491.8 431.2 L2508.0 423.1 L2519.7 405.6 L2520.9 391.6 L2530.0 395.0 L2530.0 440.0 L2370.0 440.0Z" fill="#f4f4f4"/>
<path d="M2462.0 424.0 L2465.0 431.2 L2463.8 442.9 L2466.1 460.3 L2473.1 473.1 L2481.3 481.3 L2487.1 489.4 L2496.4 482.4 L2501.0 470.8 L2496.4 445.2 L2491.8 431.2 L2508.0 423.1 L2512.0 418.0 L2480.0 420.0Z" fill="#d5dfe6"/>
<path d="M2467.0 459.0 L2477.0 457.0 L2480.0 465.0 L2470.0 464.0Z" fill="#f4f4f4"/>
<path d="M2557.5 240.3 L2542.4 238.2 L2529.4 240.3 L2520.8 244.6 L2507.8 240.3 L2512.1 259.8 L2522.9 270.6 L2557.5 281.4Z" fill="#d5dfe6"/>
<path d="M2041.4 197.1 L2090.0 178.7 L2096.5 182.0 L2087.9 192.8 L2113.8 190.6 L2111.6 205.7 L2092.2 212.2 L2081.4 227.4 L2064.1 227.4 L2057.6 225.2 L2068.4 210.1 L2066.3 205.7Z" fill="#d5dfe6"/>
<path d="M2128.9 277.1 L2137.6 285.7 L2152.7 296.5 L2176.5 277.1 L2195.9 274.9 L2198.1 279.2 L2176.5 283.5 L2165.7 298.7 L2152.7 309.5 L2150.5 316.0 L2133.3 318.1 L2122.4 311.6 L2133.3 307.3 L2137.6 298.7Z" fill="#d5dfe6"/>
<path d="M2180.8 359.2 L2195.9 344.1 L2215.4 347.3 L2200.3 352.7 L2185.1 361.3Z" fill="#d5dfe6"/>
<path d="M2269.4 266.3 L2278.1 264.1 L2280.2 277.1 L2271.6 279.2Z" fill="#d5dfe6"/>
<path d="M2208.9 169.0 L2215.4 169.0 L2213.2 188.5Z" fill="#d5dfe6"/>
<path d="M2262.9 376.5 L2273.7 374.3 L2269.4 395.9 L2264.0 395.9Z" fill="#d5dfe6"/>
<path d="M2253.2 365.7 L2260.8 363.5 L2256.4 374.3Z" fill="#d5dfe6"/>
<path d="M2105.2 261.9 L2111.6 260.9 L2117.0 268.4 L2111.6 270.6Z" fill="#d5dfe6"/>
<path d="M2176.5 203.6 L2187.3 212.2 L2189.4 218.7 L2180.8 214.4Z" fill="#d5dfe6"/>
<path d="M2208.9 244.6 L2215.4 242.5 L2215.4 255.4 L2210.0 254.4Z" fill="#d5dfe6"/>
<path d="M2126.8 192.8 L2131.5 193.2 L2130.2 196.2Z" fill="#d5dfe6"/>
<path d="M2157.0 190.6 L2161.8 191.7 L2160.3 199.7Z" fill="#d5dfe6"/>
<path d="M2178.6 237.1 L2192.0 237.7 L2185.1 241.6Z" fill="#d5dfe6"/>
<path d="M2174.3 253.7 L2187.3 249.0 L2183.4 255.9Z" fill="#d5dfe6"/>
<path d="M2202.4 245.1 L2207.2 235.6 L2209.3 251.6Z" fill="#d5dfe6"/>
<path d="M2213.2 249.4 L2216.7 250.3 L2215.4 255.9Z" fill="#d5dfe6"/>
<path d="M2270.5 286.8 L2280.2 285.3 L2278.5 289.2Z" fill="#d5dfe6"/>
<path d="M2271.6 312.7 L2280.2 311.6 L2278.1 318.6Z" fill="#d5dfe6"/>
<path d="M2262.9 321.4 L2266.8 320.3 L2269.4 331.5 L2265.1 330.7Z" fill="#d5dfe6"/>
<path d="M2221.9 379.7 L2228.3 378.2 L2225.3 385.6Z" fill="#d5dfe6"/>
<path d="M2165.7 359.2 L2172.6 360.1 L2168.9 366.1Z" fill="#d5dfe6"/>
<path d="M2042.5 398.1 L2045.7 397.7 L2055.9 413.7 L2053.3 414.3Z" fill="#d5dfe6"/>
<path d="M2077.1 320.3 L2079.7 321.2 L2078.8 325.0Z" fill="#d5dfe6"/>
<path d="M2100.8 338.7 L2105.6 337.6 L2104.3 340.6Z" fill="#d5dfe6"/>
<path d="M2131.1 418.0 L2142.3 419.3 L2137.6 421.4Z" fill="#d5dfe6"/>
<path d="M2087.9 298.7 L2092.2 298.2 L2090.5 301.3Z" fill="#d5dfe6"/>
<path d="M2105.2 307.3 L2109.5 305.8 L2108.4 309.0Z" fill="#d5dfe6"/>
<path d="M2153.8 218.7 L2157.0 218.3 L2156.2 220.9Z" fill="#d5dfe6"/>
<path d="M2291.0 204.7 L2295.3 204.0 L2294.3 207.5Z" fill="#d5dfe6"/>
<path d="M2289.9 238.2 L2296.0 236.0 L2296.0 240.3Z" fill="#d5dfe6"/>
<path d="M2298.2 448.5 L2306.8 446.3 L2321.9 483.0 L2324.1 500.3 L2317.6 500.3 L2306.8 483.0Z" fill="#d5dfe6"/>
<path d="M2397.6 511.1 L2404.1 504.6 L2407.3 513.3 L2401.9 515.4Z" fill="#d5dfe6"/>
<path d="M2371.6 554.4 L2386.8 541.4 L2399.7 530.6 L2410.5 526.3 L2425.7 530.6 L2436.5 545.7 L2443.0 558.7 L2430.0 560.8 L2414.9 558.7 L2395.4 556.5 L2382.4 558.7Z" fill="#d5dfe6"/>
<path d="M2410.5 576.0 L2425.7 567.3 L2438.6 569.5 L2430.0 578.1 L2421.4 601.9 L2423.5 619.2 L2417.0 623.5 L2410.5 601.9Z" fill="#d5dfe6"/>
<path d="M2440.8 569.5 L2464.6 567.3 L2486.2 580.3 L2479.7 588.9 L2464.6 584.6 L2466.7 601.9 L2460.3 617.0 L2455.9 619.2 L2451.6 588.9Z" fill="#d5dfe6"/>
<path d="M2455.9 621.3 L2473.2 614.9 L2490.5 604.1 L2497.0 599.7 L2484.0 612.7 L2464.6 627.8Z" fill="#d5dfe6"/>
<path d="M2490.5 604.1 L2503.5 599.7 L2520.8 595.4 L2512.1 601.9 L2497.0 606.2Z" fill="#d5dfe6"/>
<path d="M2512.1 448.5 L2520.8 446.3 L2518.6 450.6Z" fill="#d5dfe6"/>
<path d="M2531.6 446.3 L2538.1 445.2 L2533.7 448.5Z" fill="#d5dfe6"/>
<path d="M2280.2 452.8 L2287.8 449.5 L2293.2 457.1 L2288.9 478.7 L2284.5 472.2Z" fill="#d5dfe6"/>
<path d="M2128.9 445.2 L2132.6 444.6 L2131.1 450.2Z" fill="#d5dfe6"/>
<path d="M2111.6 479.1 L2116.4 480.0 L2113.8 482.0Z" fill="#d5dfe6"/>
<path d="M2110.6 496.4 L2113.2 496.0 L2112.5 507.2 L2111.0 506.4Z" fill="#d5dfe6"/>
<path d="M2094.4 509.4 L2096.9 508.5 L2095.6 513.7Z" fill="#d5dfe6"/>
<path d="M2237.0 487.8 L2240.5 486.9 L2239.6 494.3Z" fill="#d5dfe6"/>
<path d="M2097.6 491.7 L2100.8 490.8 L2099.1 493.8Z" fill="#d5dfe6"/>
<path d="M2042.0 503.0 L2054.0 512.0 L2062.0 528.0 L2062.0 536.0 L2055.0 532.0 L2048.0 520.0Z" fill="#d5dfe6"/>
<path d="M2061.0 523.4 L2337.0 523.4 L2342.0 532.0 L2350.0 536.0 L2360.0 540.0 L2372.0 546.0 L2385.0 540.0 L2405.0 535.0 L2432.0 555.0 L2447.0 570.0 L2452.0 590.0 L2455.0 617.0 L2460.0 628.0 L2485.0 620.0 L2500.0 610.0 L2520.0 598.0 L2556.0 583.0" fill="none" stroke="#c9c9c9" stroke-width="1.2"/>
<path d="M2120.3 740.9 L2141.9 738.7 L2143.0 742.0 L2178.6 754.9 L2207.8 754.9 L2208.9 750.6 L2224.0 750.6 L2239.2 762.5 L2244.6 773.3 L2256.4 781.9 L2262.9 773.3 L2274.8 773.3 L2295.3 805.7" fill="none" stroke="#c9c9c9" stroke-width="1.2"/>
<path d="M2037 1081.5 H2554" stroke="#eef1f3" stroke-width="2" stroke-dasharray="11 7"/>
</svg>
<div class="mlbl" style="left:304px;top:30.475px;transform:translateX(-50%);font-size:15.5px;color:#666;font-weight:normal;text-shadow:0 0 2px #fff,0 0 2px #fff;-webkit-text-stroke:0.2px #666">NU</div>
<div class="mlbl" style="left:54px;top:76.475px;transform:translateX(-50%);font-size:15.5px;color:#666;font-weight:normal;text-shadow:0 0 2px #fff,0 0 2px #fff;-webkit-text-stroke:0.2px #666">NT</div>
<div class="mlbl" style="left:102px;top:223.475px;transform:translateX(-50%);font-size:15.5px;color:#666;font-weight:normal;text-shadow:0 0 2px #fff,0 0 2px #fff;-webkit-text-stroke:0.2px #666">AB</div>
<div class="mlbl" style="left:281px;top:228.475px;transform:translateX(-50%);font-size:15.5px;color:#666;font-weight:normal;text-shadow:0 0 2px #fff,0 0 2px #fff;-webkit-text-stroke:0.2px #666">MB</div>
<div class="mlbl" style="left:193px;top:260.475px;transform:translateX(-50%);font-size:15.5px;color:#666;font-weight:normal;text-shadow:0 0 2px #fff,0 0 2px #fff;-webkit-text-stroke:0.2px #666">SK</div>
<div class="mlbl" style="left:383px;top:306.475px;transform:translateX(-50%);font-size:15.5px;color:#666;font-weight:normal;text-shadow:0 0 2px #fff,0 0 2px #fff;-webkit-text-stroke:0.2px #666">ON</div>
<div class="mlbl" style="left:52px;top:371.475px;transform:translateX(-50%);font-size:15.5px;color:#666;font-weight:normal;text-shadow:0 0 2px #fff,0 0 2px #fff;-webkit-text-stroke:0.2px #666">WA</div>
<div class="mlbl" style="left:158px;top:376.475px;transform:translateX(-50%);font-size:15.5px;color:#666;font-weight:normal;text-shadow:0 0 2px #fff,0 0 2px #fff;-webkit-text-stroke:0.2px #666">MT</div>
<div class="mlbl" style="left:248px;top:369.475px;transform:translateX(-50%);font-size:15.5px;color:#666;font-weight:normal;text-shadow:0 0 2px #fff,0 0 2px #fff;-webkit-text-stroke:0.2px #666">ND</div>
<div class="mlbl" style="left:305px;top:386.475px;transform:translateX(-50%);font-size:15.5px;color:#666;font-weight:normal;text-shadow:0 0 2px #fff,0 0 2px #fff;-webkit-text-stroke:0.2px #666">MN</div>
<div class="mlbl" style="left:354px;top:407.475px;transform:translateX(-50%);font-size:15.5px;color:#666;font-weight:normal;text-shadow:0 0 2px #fff,0 0 2px #fff;-webkit-text-stroke:0.2px #666">WI</div>
<div class="mlbl" style="left:403px;top:421.475px;transform:translateX(-50%);font-size:15.5px;color:#666;font-weight:normal;text-shadow:0 0 2px #fff,0 0 2px #fff;-webkit-text-stroke:0.2px #666">MI</div>
<div class="mlbl" style="left:494px;top:432.475px;transform:translateX(-50%);font-size:15.5px;color:#666;font-weight:normal;text-shadow:0 0 2px #fff,0 0 2px #fff;-webkit-text-stroke:0.2px #666">NY</div>
<div class="mlbl" style="left:48px;top:421.475px;transform:translateX(-50%);font-size:15.5px;color:#666;font-weight:normal;text-shadow:0 0 2px #fff,0 0 2px #fff;-webkit-text-stroke:0.2px #666">OR</div>
<div class="mlbl" style="left:111px;top:424.475px;transform:translateX(-50%);font-size:15.5px;color:#666;font-weight:normal;text-shadow:0 0 2px #fff,0 0 2px #fff;-webkit-text-stroke:0.2px #666">ID</div>
<div class="mlbl" style="left:176px;top:431.475px;transform:translateX(-50%);font-size:15.5px;color:#666;font-weight:normal;text-shadow:0 0 2px #fff,0 0 2px #fff;-webkit-text-stroke:0.2px #666">WY</div>
<div class="mlbl" style="left:250px;top:410.475px;transform:translateX(-50%);font-size:15.5px;color:#666;font-weight:normal;text-shadow:0 0 2px #fff,0 0 2px #fff;-webkit-text-stroke:0.2px #666">SD</div>
<div class="mlbl" style="left:258px;top:451.475px;transform:translateX(-50%);font-size:15.5px;color:#666;font-weight:normal;text-shadow:0 0 2px #fff,0 0 2px #fff;-webkit-text-stroke:0.2px #666">NE</div>
<div class="mlbl" style="left:316px;top:444.475px;transform:translateX(-50%);font-size:15.5px;color:#666;font-weight:normal;text-shadow:0 0 2px #fff,0 0 2px #fff;-webkit-text-stroke:0.2px #666">IA</div>
<div class="mlbl" style="left:422px;top:463.475px;transform:translateX(-50%);font-size:15.5px;color:#666;font-weight:normal;text-shadow:0 0 2px #fff,0 0 2px #fff;-webkit-text-stroke:0.2px #666">OH</div>
<div class="mlbl" style="left:472px;top:458.475px;transform:translateX(-50%);font-size:15.5px;color:#666;font-weight:normal;text-shadow:0 0 2px #fff,0 0 2px #fff;-webkit-text-stroke:0.2px #666">PA</div>
<div class="mlbl" style="left:84px;top:474.475px;transform:translateX(-50%);font-size:15.5px;color:#666;font-weight:normal;text-shadow:0 0 2px #fff,0 0 2px #fff;-webkit-text-stroke:0.2px #666">NV</div>
<div class="mlbl" style="left:136px;top:482.475px;transform:translateX(-50%);font-size:15.5px;color:#666;font-weight:normal;text-shadow:0 0 2px #fff,0 0 2px #fff;-webkit-text-stroke:0.2px #666">UT</div>
<div class="mlbl" style="left:388px;top:467.475px;transform:translateX(-50%);font-size:15.5px;color:#666;font-weight:normal;text-shadow:0 0 2px #fff,0 0 2px #fff;-webkit-text-stroke:0.2px #666">IN</div>
<div class="mlbl" style="left:326px;top:493.475px;transform:translateX(-50%);font-size:15.5px;color:#666;font-weight:normal;text-shadow:0 0 2px #fff,0 0 2px #fff;-webkit-text-stroke:0.2px #666">MO</div>
<div class="mlbl" style="left:405px;top:500.475px;transform:translateX(-50%);font-size:15.5px;color:#666;font-weight:normal;text-shadow:0 0 2px #fff,0 0 2px #fff;-webkit-text-stroke:0.2px #666">KY</div>
<div class="mlbl" style="left:435px;top:489.475px;transform:translateX(-50%);font-size:15.5px;color:#666;font-weight:normal;text-shadow:0 0 2px #fff,0 0 2px #fff;-webkit-text-stroke:0.2px #666">WV</div>
<div class="mlbl" style="left:136px;top:541.475px;transform:translateX(-50%);font-size:15.5px;color:#666;font-weight:normal;text-shadow:0 0 2px #fff,0 0 2px #fff;-webkit-text-stroke:0.2px #666">AZ</div>
<div class="mlbl" style="left:193px;top:541.475px;transform:translateX(-50%);font-size:15.5px;color:#666;font-weight:normal;text-shadow:0 0 2px #fff,0 0 2px #fff;-webkit-text-stroke:0.2px #666">NM</div>
<div class="mlbl" style="left:326px;top:529.475px;transform:translateX(-50%);font-size:15.5px;color:#666;font-weight:normal;text-shadow:0 0 2px #fff,0 0 2px #fff;-webkit-text-stroke:0.2px #666">AR</div>
<div class="mlbl" style="left:384px;top:525.475px;transform:translateX(-50%);font-size:15.5px;color:#666;font-weight:normal;text-shadow:0 0 2px #fff,0 0 2px #fff;-webkit-text-stroke:0.2px #666">TN</div>
<div class="mlbl" style="left:354px;top:553.475px;transform:translateX(-50%);font-size:15.5px;color:#666;font-weight:normal;text-shadow:0 0 2px #fff,0 0 2px #fff;-webkit-text-stroke:0.2px #666">MS</div>
<div class="mlbl" style="left:385px;top:560.475px;transform:translateX(-50%);font-size:15.5px;color:#666;font-weight:normal;text-shadow:0 0 2px #fff,0 0 2px #fff;-webkit-text-stroke:0.2px #666">AL</div>
<div class="mlbl" style="left:419px;top:568.475px;transform:translateX(-50%);font-size:15.5px;color:#666;font-weight:normal;text-shadow:0 0 2px #fff,0 0 2px #fff;-webkit-text-stroke:0.2px #666">GA</div>
<div class="mlbl" style="left:445px;top:549.475px;transform:translateX(-50%);font-size:15.5px;color:#666;font-weight:normal;text-shadow:0 0 2px #fff,0 0 2px #fff;-webkit-text-stroke:0.2px #666">SC</div>
<div class="mlbl" style="left:261px;top:574.475px;transform:translateX(-50%);font-size:15.5px;color:#666;font-weight:normal;text-shadow:0 0 2px #fff,0 0 2px #fff;-webkit-text-stroke:0.2px #666">TX</div>
<div class="mlbl" style="left:334px;top:587.475px;transform:translateX(-50%);font-size:15.5px;color:#666;font-weight:normal;text-shadow:0 0 2px #fff,0 0 2px #fff;-webkit-text-stroke:0.2px #666">LA</div>
<div class="mlbl" style="left:436px;top:617.475px;transform:translateX(-50%);font-size:15.5px;color:#666;font-weight:normal;text-shadow:0 0 2px #fff,0 0 2px #fff;-webkit-text-stroke:0.2px #666">FL</div>
<div class="mlbl" style="left:-2px;top:256.475px;font-size:15.5px;color:#666;font-weight:normal;text-shadow:0 0 2px #fff,0 0 2px #fff;-webkit-text-stroke:0.2px #666">BC</div>
<div class="mlbl" style="left:504px;top:309.475px;font-size:15.5px;color:#666;font-weight:normal;text-shadow:0 0 2px #fff,0 0 2px #fff;-webkit-text-stroke:0.2px #666">Q</div>
<div class="mlbl" style="left:133px;top:150.45px;transform:translateX(-50%);font-size:21px;color:#686868;font-weight:bold;text-shadow:0 0 2px #fff,0 0 2px #fff;-webkit-text-stroke:0 #686868">Canada</div>
<div class="mlbl" style="left:397px;top:161.65px;transform:translateX(-50%);font-size:17px;color:#9c9c9c;font-weight:normal;text-shadow:0 0 2px #fff,0 0 2px #fff;-webkit-text-stroke:0.2px #9c9c9c">Hudson Bay</div>
<div class="mlbl" style="left:451px;top:8.924999999999999px;transform:translateX(-50%);font-size:16.5px;color:#a0a0a0;font-weight:normal;text-shadow:0 0 2px #fff,0 0 2px #fff;-webkit-text-stroke:0.2px #a0a0a0">Northwestern</div>
<div class="mlbl" style="left:451px;top:25.924999999999997px;transform:translateX(-50%);font-size:16.5px;color:#a0a0a0;font-weight:normal;text-shadow:0 0 2px #fff,0 0 2px #fff;-webkit-text-stroke:0.2px #a0a0a0">Passages</div>
<div class="mlbl" style="left:175px;top:471.45px;font-size:21px;color:#686868;font-weight:bold;text-shadow:0 0 2px #fff,0 0 2px #fff;-webkit-text-stroke:0 #686868">United Sta</div>
<div class="mlbl" style="left:350px;top:635.925px;transform:translateX(-50%);font-size:16.5px;color:#a0a0a0;font-weight:normal;text-shadow:0 0 2px #fff,0 0 2px #fff;-webkit-text-stroke:0.2px #a0a0a0">Gulf of</div>
<div class="mlbl" style="left:350px;top:652.925px;transform:translateX(-50%);font-size:16.5px;color:#a0a0a0;font-weight:normal;text-shadow:0 0 2px #fff,0 0 2px #fff;-webkit-text-stroke:0.2px #a0a0a0">Mexico</div>
<div class="mlbl" style="left:194px;top:656.45px;font-size:21px;color:#686868;font-weight:bold;text-shadow:0 0 2px #fff,0 0 2px #fff;-webkit-text-stroke:0 #686868">Mexi</div>
<div class="mlbl" style="left:460px;top:681.45px;transform:translateX(-50%);font-size:21px;color:#686868;font-weight:bold;text-shadow:0 0 2px #fff,0 0 2px #fff;-webkit-text-stroke:0 #686868">Cuba</div>
<div class="mlbl" style="left:346px;top:741.45px;transform:translateX(-50%);font-size:21px;color:#686868;font-weight:bold;text-shadow:0 0 2px #fff,0 0 2px #fff;-webkit-text-stroke:0 #686868">Guatemala</div>
<div class="mlbl" style="left:445px;top:757.925px;font-size:16.5px;color:#a0a0a0;font-weight:normal;text-shadow:0 0 2px #fff,0 0 2px #fff;-webkit-text-stroke:0.2px #a0a0a0">Caribbean</div>
<div class="mlbl" style="left:413px;top:776.45px;transform:translateX(-50%);font-size:21px;color:#686868;font-weight:bold;text-shadow:0 0 2px #fff,0 0 2px #fff;-webkit-text-stroke:0 #686868">Nicaragua</div>
<div class="mlbl" style="left:475px;top:863.45px;font-size:21px;color:#686868;font-weight:bold;text-shadow:0 0 2px #fff,0 0 2px #fff;-webkit-text-stroke:0 #686868">Colo</div>
<div class="mlbl" style="left:423px;top:914.45px;font-size:21px;color:#686868;font-weight:bold;text-shadow:0 0 2px #fff,0 0 2px #fff;-webkit-text-stroke:0 #686868">Ec</div>
<div class="mlbl" style="left:466px;top:1008.45px;font-size:21px;color:#686868;font-weight:bold;text-shadow:0 0 2px #fff,0 0 2px #fff;-webkit-text-stroke:0 #686868">Peru</div>
<svg class="a" style="left:0;top:0" width="517" height="1020" viewBox="2037 170 517 1020">
<defs><filter id="sh" x="-30%" y="-30%" width="160%" height="160%"><feGaussianBlur stdDeviation="2"/></filter></defs>
<path d="M2159.2 592.5 L2143.25 575.22 A21.7 21.7 0 1 1 2175.15 575.22 Z" fill="rgba(0,0,0,.25)" filter="url(#sh)" transform="translate(-1 1)"/>
<path d="M2159.2 592.5 L2143.25 575.22 A21.7 21.7 0 1 1 2175.15 575.22 Z" fill="#000"/>
<circle cx="2159.2" cy="560.0" r="20" fill="#b0fafb"/>
<circle cx="2171" cy="546.4" r="9" fill="#fff"/><circle cx="2171" cy="546.4" r="7.3" fill="#e8140c"/>
<path d="M2144.7 667 L2128.75 649.72 A21.7 21.7 0 1 1 2160.65 649.72 Z" fill="rgba(0,0,0,.25)" filter="url(#sh)" transform="translate(-1 1)"/>
<path d="M2144.7 667 L2128.75 649.72 A21.7 21.7 0 1 1 2160.65 649.72 Z" fill="#000"/>
<circle cx="2144.7" cy="634.5" r="20" fill="#b0fafb"/>
<path d="M2293.5 862.6 L2277.55 845.32 A21.7 21.7 0 1 1 2309.45 845.32 Z" fill="rgba(0,0,0,.25)" filter="url(#sh)" transform="translate(-1 1)"/>
<path d="M2293.5 862.6 L2277.55 845.32 A21.7 21.7 0 1 1 2309.45 845.32 Z" fill="#000"/>
<circle cx="2293.5" cy="830.1" r="20" fill="#ee9e4d"/>
<rect x="2240" y="584.8" width="39" height="38.90000000000009" rx="6" fill="rgba(0,0,0,.2)" filter="url(#sh)"/>
<path d="M2252.3 621.7 L2260.3 632.3 L2268.3 621.7Z" fill="#000"/>
<rect x="2242.2" y="585.0" width="36.6" height="36.50000000000009" rx="5" fill="#9a9a9a" stroke="#000" stroke-width="2.4"/>
<rect x="2305.4" y="641.6" width="37.90000000000009" height="36.89999999999998" rx="6" fill="rgba(0,0,0,.2)" filter="url(#sh)"/>
<path d="M2317.3 676.5 L2325.3 686.4 L2333.3 676.5Z" fill="#000"/>
<rect x="2307.6" y="641.8000000000001" width="35.50000000000009" height="34.49999999999998" rx="5" fill="#9a9a9a" stroke="#000" stroke-width="2.4"/>
<circle cx="2087" cy="689.2" r="37" fill="rgba(128,128,128,.4)"/>
<circle cx="2087" cy="689.2" r="32.7" fill="rgba(60,60,60,.55)"/>
<circle cx="2087" cy="689.2" r="28.2" fill="#000" stroke="#fff" stroke-width="1.6"/>
<text x="2087" y="695.2" text-anchor="middle" font-family="Liberation Sans" font-size="17" fill="#fff" stroke="#fff" stroke-width="0.5">48</text>
<circle cx="2308" cy="723.6" r="37" fill="rgba(128,128,128,.4)"/>
<circle cx="2308" cy="723.6" r="32.7" fill="rgba(60,60,60,.55)"/>
<circle cx="2308" cy="723.6" r="28.2" fill="#000" stroke="#fff" stroke-width="1.6"/>
<text x="2308" y="729.6" text-anchor="middle" font-family="Liberation Sans" font-size="17" fill="#fff" stroke="#fff" stroke-width="0.5">5</text>
<circle cx="2391.1" cy="637.6" r="37" fill="rgba(128,128,128,.4)"/>
<circle cx="2391.1" cy="637.6" r="32.7" fill="rgba(60,60,60,.55)"/>
<circle cx="2391.1" cy="637.6" r="28.2" fill="#000" stroke="#fff" stroke-width="1.6"/>
<text x="2391.1" y="643.6" text-anchor="middle" font-family="Liberation Sans" font-size="17" fill="#fff" stroke="#fff" stroke-width="0.5">20</text>
<circle cx="2508.7" cy="678.6" r="37" fill="rgba(128,128,128,.4)"/>
<circle cx="2508.7" cy="678.6" r="32.7" fill="rgba(60,60,60,.55)"/>
<circle cx="2508.7" cy="678.6" r="28.2" fill="#000" stroke="#fff" stroke-width="1.6"/>
<text x="2508.7" y="684.6" text-anchor="middle" font-family="Liberation Sans" font-size="16.5" fill="#fff" stroke="#fff" stroke-width="0.5">100+</text>
<circle cx="2529.3" cy="657.7" r="10" fill="#fff"/><circle cx="2529.3" cy="657.7" r="8" fill="#e8140c"/>
</svg>
<div class="a" style="left:447px;top:886px;width:51px;height:104px;background:#fff;border-radius:5px;box-shadow:0 1px 5px rgba(0,0,0,.3)"></div>
<div class="a" style="left:447px;top:936px;width:51px;height:1.5px;background:#c8c8c8"></div>
<div class="a" style="left:463px;top:910px;width:19px;height:2.2px;background:#666"></div>
<div class="a" style="left:471.4000000000001px;top:901.5px;width:2.2px;height:19px;background:#666"></div>
<div class="a" style="left:461px;top:963px;width:22px;height:2.2px;background:#666"></div>
</div>
<div class="a" style="left:2036px;top:169px;width:1px;height:1021px;background:#e3e3e3"></div>
</div></div>
</body></html>
